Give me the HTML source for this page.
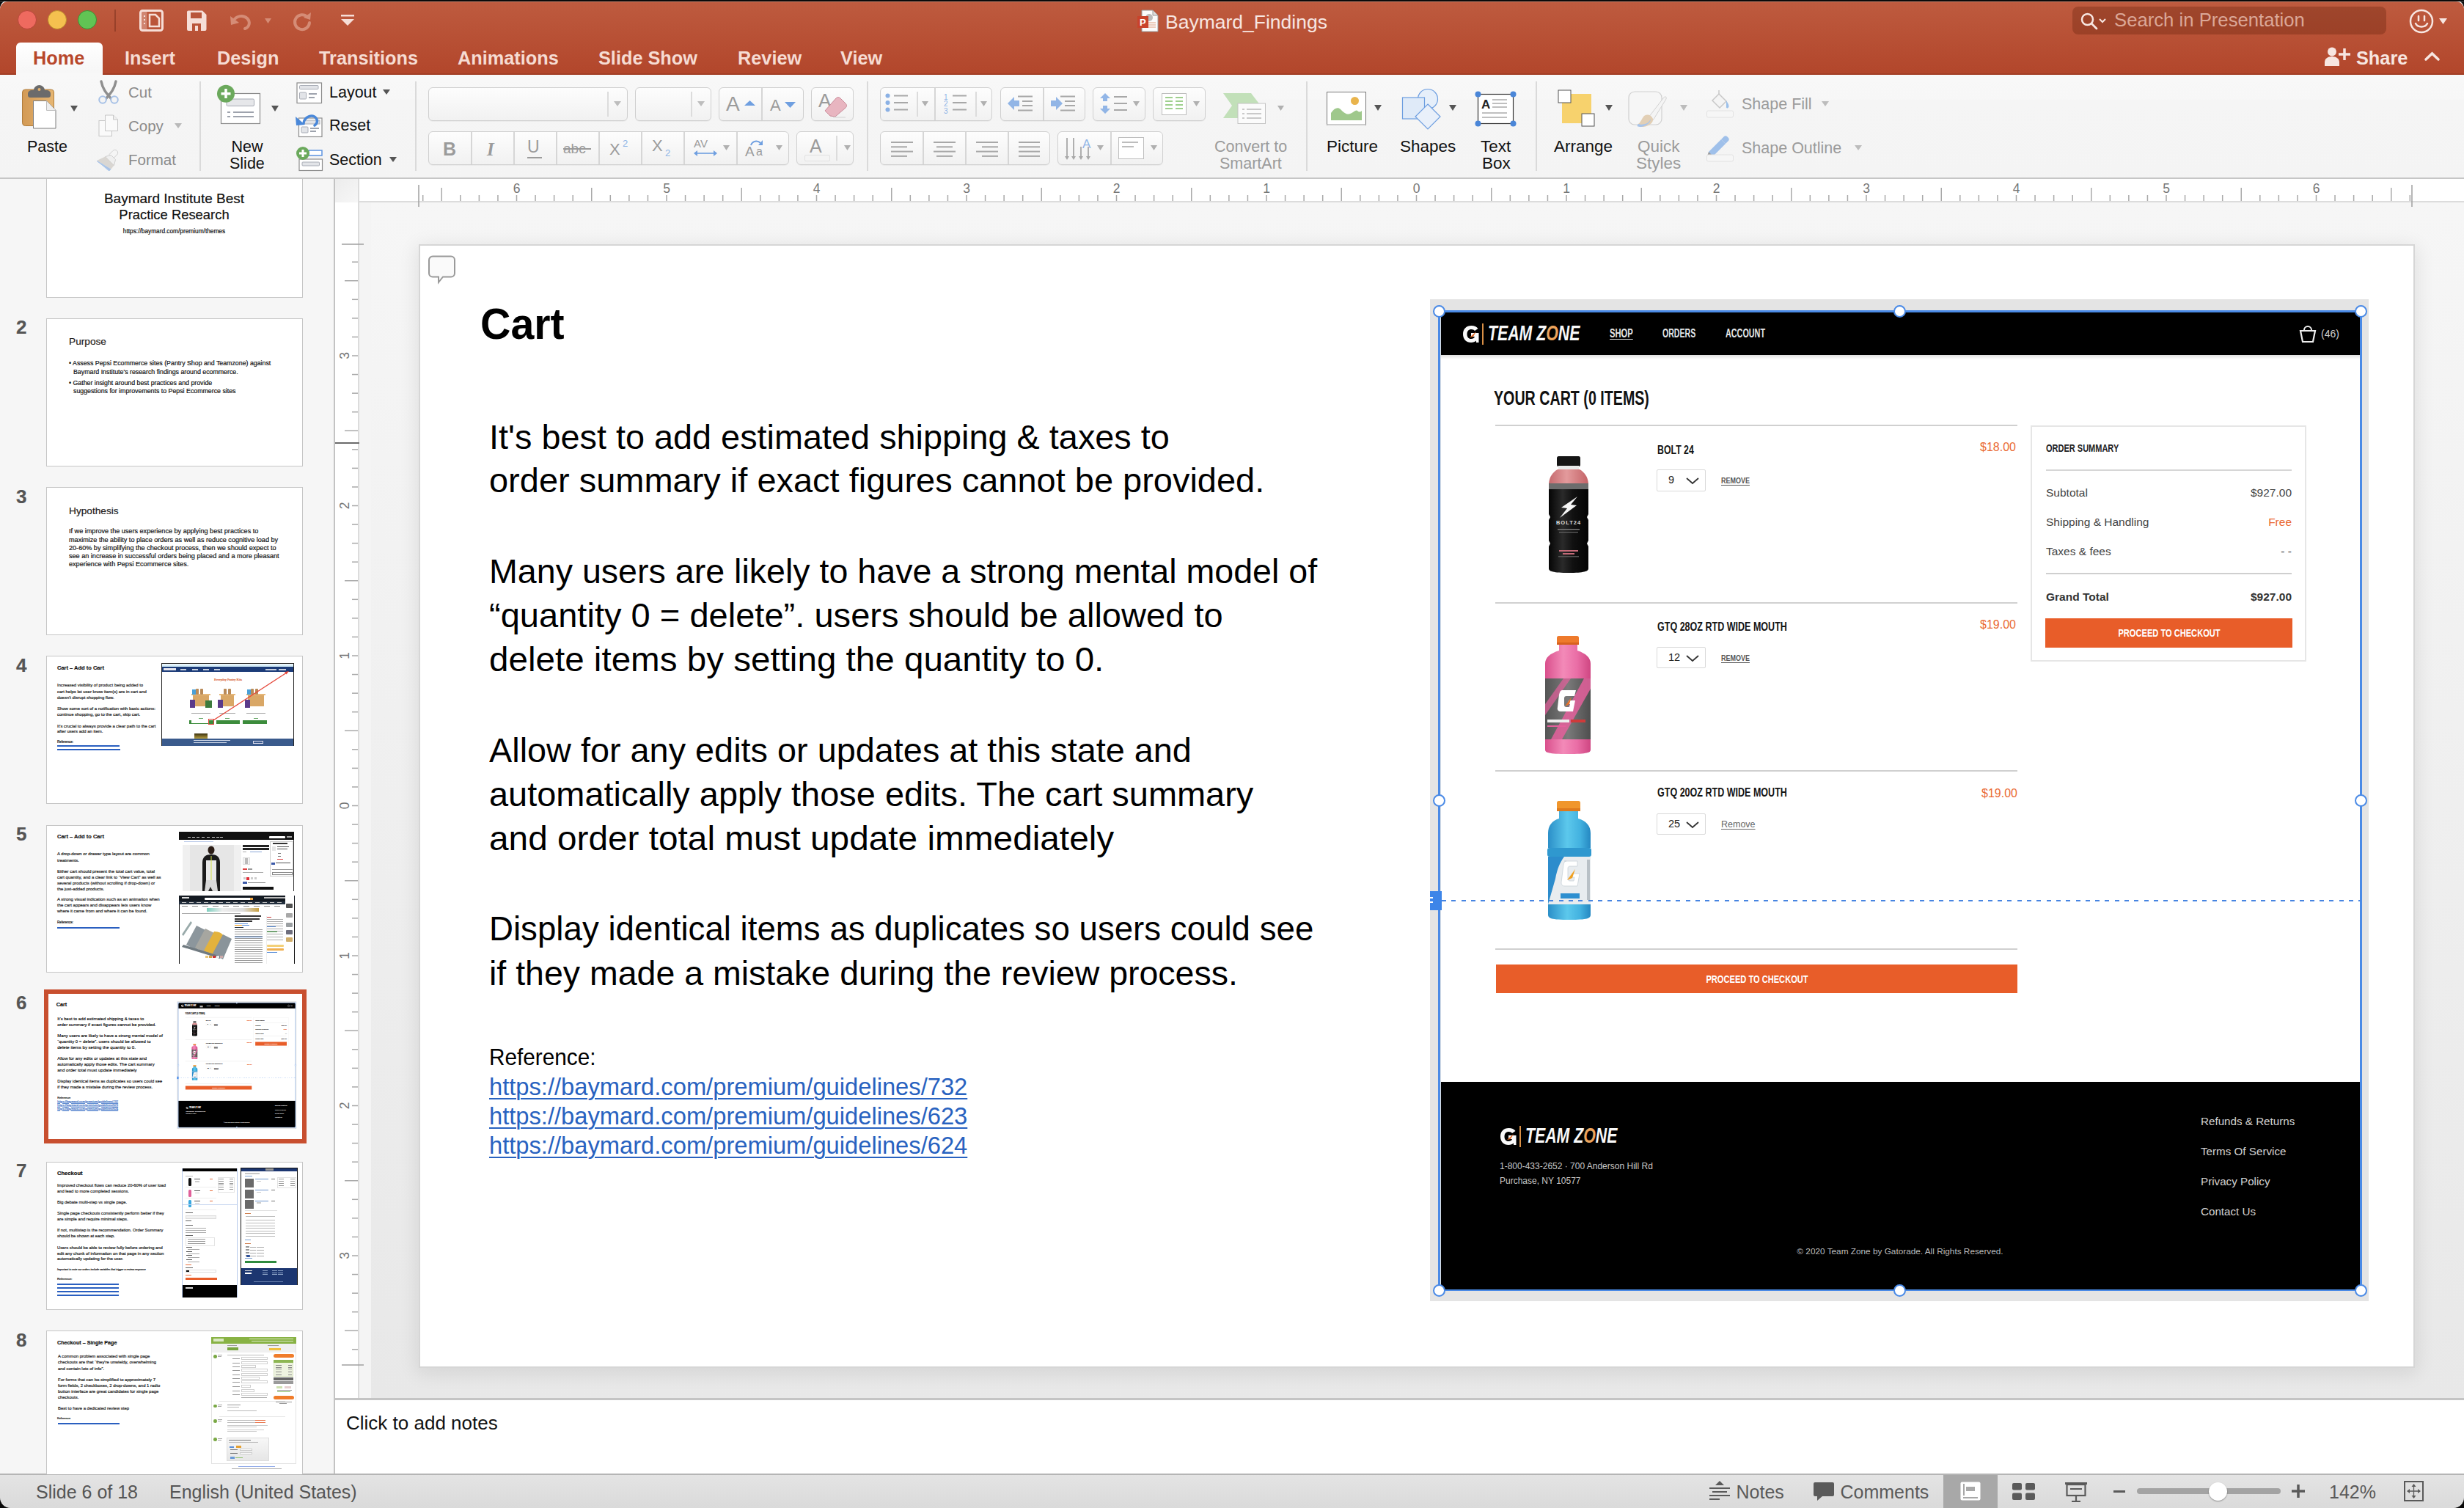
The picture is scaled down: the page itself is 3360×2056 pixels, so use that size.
<!DOCTYPE html>
<html><head><meta charset="utf-8">
<style>
*{margin:0;padding:0;box-sizing:border-box}
html,body{width:3360px;height:2056px;overflow:hidden;background:#0a0a0a;font-family:"Liberation Sans",sans-serif}
.a{position:absolute}
.t{position:absolute;white-space:nowrap;line-height:1}
svg{overflow:visible}
.th .t{-webkit-text-stroke:0.2px currentColor}
.th6 .t{-webkit-text-stroke:1px currentColor}
.th6 .t[style*=underline]{text-decoration-thickness:9px !important;text-underline-offset:3px !important}
</style></head><body>
<div class="a" style="left:0px;top:0px;width:3360px;height:2056px;background:#f3f3f3;border-radius:12px 12px 14px 14px"></div>
<div class="a" style="left:0px;top:0px;width:3360px;height:2px;background:#0a0a0a"></div>
<div class="a" style="left:0px;top:2px;width:3360px;height:99px;background:linear-gradient(#be5b3f,#b2462b);border-radius:11px 11px 0 0"></div>
<div class="a" style="left:0px;top:2px;width:3360px;height:1px;background:rgba(255,255,255,0.25);border-radius:11px 11px 0 0"></div>
<div class="a" style="left:24px;top:14px;width:26px;height:26px;border-radius:50%;background:#ee6a5f;border:1.5px solid #b8463c"></div>
<div class="a" style="left:65px;top:14px;width:26px;height:26px;border-radius:50%;background:#f5c04f;border:1.5px solid #c1922f"></div>
<div class="a" style="left:106px;top:14px;width:26px;height:26px;border-radius:50%;background:#61c454;border:1.5px solid #3b9234"></div>
<div class="a" style="left:156px;top:13px;width:2px;height:30px;background:rgba(90,30,15,0.35)"></div>
<div class="t" style="left:1589px;top:17.1px;font-size:26.5px;color:#f7e6e1;font-weight:normal;">Baymard_Findings</div>
<div class="a" style="left:2826px;top:9px;width:428px;height:38px;border-radius:8px;background:rgba(90,25,8,0.30)"></div>
<div class="t" style="left:2883px;top:15.2px;font-size:25.7px;color:#dba797;font-weight:normal;">Search in Presentation</div>
<div class="a" style="left:22px;top:58px;width:118px;height:43px;border-radius:6px 6px 0 0;background:linear-gradient(#ffffff,#f6f6f6)"></div>
<div class="t" style="left:45px;top:66.5px;font-size:25.3px;color:#b8472b;font-weight:bold;">Home</div>
<div class="t" style="left:170px;top:66.5px;font-size:25.3px;color:#f6dcd3;font-weight:bold;">Insert</div>
<div class="t" style="left:296px;top:66.5px;font-size:25.3px;color:#f6dcd3;font-weight:bold;">Design</div>
<div class="t" style="left:435px;top:66.5px;font-size:25.3px;color:#f6dcd3;font-weight:bold;">Transitions</div>
<div class="t" style="left:624px;top:66.5px;font-size:25.3px;color:#f6dcd3;font-weight:bold;">Animations</div>
<div class="t" style="left:816px;top:66.5px;font-size:25.3px;color:#f6dcd3;font-weight:bold;">Slide Show</div>
<div class="t" style="left:1006px;top:66.5px;font-size:25.3px;color:#f6dcd3;font-weight:bold;">Review</div>
<div class="t" style="left:1146px;top:66.5px;font-size:25.3px;color:#f6dcd3;font-weight:bold;">View</div>
<div class="t" style="left:3213px;top:66.5px;font-size:25.3px;color:#f7e6e1;font-weight:bold;">Share</div>
<div class="a" style="left:0px;top:101px;width:3360px;height:142px;background:linear-gradient(#f8f8f8,#f7f7f7 24%,#f5f5f5 25%,#f4f4f4)"></div>
<div class="a" style="left:0px;top:100px;width:3360px;height:1.5px;background:#a23f26"></div>
<div class="a" style="left:22px;top:99px;width:118px;height:4px;background:#f8f8f8"></div>
<div class="a" style="left:0px;top:242px;width:3360px;height:2px;background:#c6c6c6"></div>
<div class="a" style="left:0px;top:244px;width:456px;height:1766px;background:#f6f6f6"></div>
<div class="a" style="left:455px;top:244px;width:2px;height:1766px;background:#c3c3c3"></div>
<div class="a" style="left:457px;top:244px;width:2903px;height:31px;background:#fff"></div>
<div class="a" style="left:457px;top:274px;width:2903px;height:2px;background:#dcdcdc"></div>
<div class="a" style="left:457px;top:244px;width:33px;height:32px;background:linear-gradient(135deg,#ececec,#f7f7f7)"></div>
<div class="a" style="left:457px;top:276px;width:32px;height:1631px;background:#fff"></div>
<div class="a" style="left:488px;top:244px;width:2px;height:1663px;background:#dcdcdc"></div>
<div class="a" style="left:490px;top:276px;width:2870px;height:1631px;background:#f4f4f4"></div>
<div class="a" style="left:506px;top:276px;width:2854px;height:1631px;background:linear-gradient(#f6f6f6,#e8e8e8)"></div>
<div class="a" style="left:457px;top:1907px;width:2903px;height:103px;background:#fff"></div>
<div class="a" style="left:457px;top:1906px;width:2903px;height:3px;background:#c4c4c4"></div>
<div class="t" style="left:472px;top:1926.9px;font-size:26px;color:#111;font-weight:normal;">Click to add notes</div>
<div class="a" style="left:0px;top:2010px;width:3360px;height:46px;background:linear-gradient(#e4e4e4,#dadada);border-radius:0 0 14px 14px"></div>
<div class="a" style="left:0px;top:2009px;width:3360px;height:2px;background:#b5b5b5"></div>
<div class="t" style="left:49px;top:2021.8px;font-size:25px;color:#555;font-weight:normal;">Slide 6 of 18</div>
<div class="t" style="left:231px;top:2021.8px;font-size:25px;color:#555;font-weight:normal;">English (United States)</div>
<div class="a" style="left:571px;top:333px;width:2722px;height:1532px;background:#fff;box-shadow:0 5px 24px 3px rgba(0,0,0,0.085);border:2px solid #d6d6d6"></div>
<svg class="a" style="left:584px;top:348px;" width="40" height="40" viewBox="0 0 40 40"><path d="M6 1.5h25a5 5 0 0 1 5 5v18a5 5 0 0 1-5 5H20l-6 7.5v-7.5H6a5 5 0 0 1-5-5v-18a5 5 0 0 1 5-5z" fill="#fafafa" stroke="#9a9a9a" stroke-width="2"/></svg>
<div class="t" style="left:655px;top:411.5px;font-size:60px;color:#000;font-weight:bold;transform:scaleX(0.955);transform-origin:0 0">Cart</div>
<div class="t" style="left:667px;top:573.3px;font-size:46.7px;color:#000;font-weight:normal;transform:scaleX(1.003);transform-origin:0 0">It's best to add estimated shipping &amp; taxes to</div>
<div class="t" style="left:667px;top:632.3px;font-size:46.7px;color:#000;font-weight:normal;transform:scaleX(1.006);transform-origin:0 0">order summary if exact figures cannot be provided.</div>
<div class="t" style="left:667px;top:756.3px;font-size:46.7px;color:#000;font-weight:normal;transform:scaleX(0.998);transform-origin:0 0">Many users are likely to have a strong mental model of</div>
<div class="t" style="left:667px;top:816.3px;font-size:46.7px;color:#000;font-weight:normal;transform:scaleX(1.008);transform-origin:0 0">“quantity 0 = delete”. users should be allowed to</div>
<div class="t" style="left:667px;top:876.3px;font-size:46.7px;color:#000;font-weight:normal;transform:scaleX(1.019);transform-origin:0 0">delete items by setting the quantity to 0.</div>
<div class="t" style="left:667px;top:1000.3px;font-size:46.7px;color:#000;font-weight:normal;transform:scaleX(1.003);transform-origin:0 0">Allow for any edits or updates at this state and</div>
<div class="t" style="left:667px;top:1060.3px;font-size:46.7px;color:#000;font-weight:normal;transform:scaleX(1.005);transform-origin:0 0">automatically apply those edits. The cart summary</div>
<div class="t" style="left:667px;top:1120.3px;font-size:46.7px;color:#000;font-weight:normal;transform:scaleX(1.023);transform-origin:0 0">and order total must update immediately</div>
<div class="t" style="left:667px;top:1243.3px;font-size:46.7px;color:#000;font-weight:normal;transform:scaleX(0.978);transform-origin:0 0">Display identical items as duplicates so users could see</div>
<div class="t" style="left:667px;top:1304.3px;font-size:46.7px;color:#000;font-weight:normal;transform:scaleX(0.996);transform-origin:0 0">if they made a mistake during the review process.</div>
<div class="t" style="left:667px;top:1426.1px;font-size:30.5px;color:#000;font-weight:normal;transform:scaleX(0.975);transform-origin:0 0">Reference:</div>
<div class="t" style="left:667px;top:1466.2px;font-size:32.7px;color:#2862c0;font-weight:normal;text-decoration:underline;text-decoration-thickness:2px;text-underline-offset:4px">https://baymard.com/premium/guidelines/732</div>
<div class="t" style="left:667px;top:1506.2px;font-size:32.7px;color:#2862c0;font-weight:normal;text-decoration:underline;text-decoration-thickness:2px;text-underline-offset:4px">https://baymard.com/premium/guidelines/623</div>
<div class="t" style="left:667px;top:1546.2px;font-size:32.7px;color:#2862c0;font-weight:normal;text-decoration:underline;text-decoration-thickness:2px;text-underline-offset:4px">https://baymard.com/premium/guidelines/624</div>
<div class="a" style="left:1950px;top:408px;width:1280px;height:1366px;background:#e4e4e4"></div>
<div class="a" style="left:1965px;top:424px;width:1254px;height:1335px;background:#fff"></div>
<div class="a" style="left:1965px;top:424px;width:1254px;height:60px;background:#000"></div>
<div class="a" style="left:1965px;top:484px;width:1254px;height:6px;background:linear-gradient(rgba(0,0,0,.12),rgba(0,0,0,0))"></div>
<svg class="a" style="left:1995px;top:443.5px;" width="22" height="23" viewBox="0 0 22 23"><path d="M11.5 0C4.5 0 0 4.5 0 11.5S4.5 23 11 23c3 0 5.5-1 7-2.5V23h3.5V10H11v5h5c-.5 2-2.5 3-5 3-3.5 0-5.5-2.5-5.5-6.5S7.5 5 11.5 5c2 0 3.5.8 4.5 2l4.5-3C18.5 1.5 15.5 0 11.5 0z" fill="#fafafa"/><path d="M9 16l9-8-4 7z" fill="#e8702a"/></svg>
<div class="a" style="left:2021px;top:440.5px;width:2px;height:29px;background:#d98f45"></div>
<div class="t" style="left:2029px;top:438.7px;font-size:30px;font-weight:bold;font-style:italic;color:#f8f8f8;transform:scaleX(0.71);transform-origin:0 0">TEAM Z<span style="color:#eba35c">O</span>NE</div>
<div class="t" style="left:2195px;top:446.9px;font-size:16px;color:#e6e6e6;font-weight:bold;transform:scaleX(0.7);transform-origin:0 0;text-decoration:underline;text-underline-offset:2px">SHOP</div>
<div class="t" style="left:2267px;top:446.9px;font-size:16px;color:#e6e6e6;font-weight:bold;transform:scaleX(0.66);transform-origin:0 0;">ORDERS</div>
<div class="t" style="left:2353px;top:446.9px;font-size:16px;color:#e6e6e6;font-weight:bold;transform:scaleX(0.675);transform-origin:0 0;">ACCOUNT</div>
<svg class="a" style="left:3135px;top:441px;" width="24" height="27" viewBox="0 0 24 27"><path d="M7 9a5 5 0 0 1 10 0" fill="none" stroke="#eee" stroke-width="2"/><path d="M2 10h20l-3 15H5z" fill="none" stroke="#eee" stroke-width="2.2"/></svg>
<div class="t" style="left:3165px;top:448.1px;font-size:14px;color:#cfcfcf;font-weight:normal;">(46)</div>
<div class="t" style="left:2037px;top:528.6px;font-size:27.5px;color:#111;font-weight:bold;transform:scaleX(0.715);transform-origin:0 0;">YOUR CART (0 ITEMS)</div>
<div class="a" style="left:2039px;top:579px;width:712px;height:2px;background:#d0d0d0"></div>
<div class="a" style="left:2039px;top:821px;width:712px;height:2px;background:#d0d0d0"></div>
<div class="a" style="left:2039px;top:1050px;width:712px;height:2px;background:#d0d0d0"></div>
<div class="a" style="left:2039px;top:1293px;width:712px;height:2px;background:#d0d0d0"></div>
<div class="t" style="left:2260px;top:605.2px;font-size:17.4px;color:#151515;font-weight:bold;transform:scaleX(0.71);transform-origin:0 0;">BOLT 24</div>
<div class="t" style="left:1749px;width:1000px;text-align:right;top:602.4px;font-size:16px;color:#ea6a33;font-weight:normal;">$18.00</div>
<div class="a" style="left:2259px;top:640px;width:67px;height:30px;border:1.5px solid #d9d9d9;border-radius:2px;background:#fff"></div>
<div class="t" style="left:2275px;top:647.2px;font-size:14.5px;color:#222;font-weight:normal;">9</div>
<svg class="a" style="left:2299px;top:651px;" width="18" height="9" viewBox="0 0 18 9"><path d="M1 1l8 7 8-7" fill="none" stroke="#333" stroke-width="1.8"/></svg>
<div class="t" style="left:2347px;top:648.9px;font-size:11.6px;color:#555;font-weight:bold;transform:scaleX(0.775);transform-origin:0 0;text-decoration:underline;text-underline-offset:2px">REMOVE</div>
<svg class="a" style="left:2104px;top:620px;" width="70" height="170" viewBox="0 0 70 170"><defs><linearGradient id="bk" x1="0" x2="1"><stop offset="0" stop-color="#050505"/><stop offset=".35" stop-color="#2a2a2a"/><stop offset=".6" stop-color="#111"/><stop offset="1" stop-color="#030303"/></linearGradient><linearGradient id="pk" x1="0" x2="1"><stop offset="0" stop-color="#c56a6e"/><stop offset=".45" stop-color="#e39a9c"/><stop offset="1" stop-color="#c46367"/></linearGradient></defs><rect x="19" y="2" width="32" height="14" rx="2.5" fill="#151515"/><rect x="21" y="15" width="28" height="5" fill="#e9e9e9"/><path d="M20 20h30c7 4 11 10 12 19H8c1-9 5-15 12-19z" fill="url(#pk)"/><rect x="8" y="39" width="54" height="8" fill="#6d6d6d"/><path d="M8 47h54v34l-2 4 2 4v28l-2 4 2 4v30c0 4-6 6-27 6s-27-2-27-6v-30l2-4-2-4v-28l2-4-2-4z" fill="url(#bk)"/><path d="M47 57L25 72l8 1-10 13L46 69l-8-1z" fill="#f6f6f6"/><text x="35" y="95" font-family="Liberation Sans" font-weight="bold" font-size="7.5" fill="#ddd" text-anchor="middle" letter-spacing="1">BOLT24</text><rect x="20" y="101" width="30" height="1.5" fill="#777"/><rect x="22" y="105" width="26" height="1.2" fill="#666"/><rect x="22" y="130" width="26" height="2" fill="#c46a78"/><rect x="27" y="134" width="16" height="2" fill="#c46a78"/><rect x="21" y="138" width="28" height="1.5" fill="#555"/></svg>
<div class="t" style="left:2260px;top:846.9px;font-size:16.9px;color:#151515;font-weight:bold;transform:scaleX(0.742);transform-origin:0 0;">GTQ 28OZ RTD WIDE MOUTH</div>
<div class="t" style="left:1749px;width:1000px;text-align:right;top:844.4px;font-size:16px;color:#ea6a33;font-weight:normal;">$19.00</div>
<div class="a" style="left:2259px;top:882px;width:67px;height:29px;border:1.5px solid #d9d9d9;border-radius:2px;background:#fff"></div>
<div class="t" style="left:2275px;top:889.2px;font-size:14.5px;color:#222;font-weight:normal;">12</div>
<svg class="a" style="left:2299px;top:893px;" width="18" height="9" viewBox="0 0 18 9"><path d="M1 1l8 7 8-7" fill="none" stroke="#333" stroke-width="1.8"/></svg>
<div class="t" style="left:2347px;top:891.1px;font-size:11.6px;color:#555;font-weight:bold;transform:scaleX(0.775);transform-origin:0 0;text-decoration:underline;text-underline-offset:2px">REMOVE</div>
<svg class="a" style="left:2104px;top:864px;" width="70" height="170" viewBox="0 0 70 170"><defs><linearGradient id="pl" x1="0" x2="1"><stop offset="0" stop-color="#d94f8c"/><stop offset=".4" stop-color="#f38ab8"/><stop offset=".7" stop-color="#ea6ea6"/><stop offset="1" stop-color="#cf4682"/></linearGradient><linearGradient id="gl" x1="0" x2="1"><stop offset="0" stop-color="#555"/><stop offset=".5" stop-color="#7a7a7a"/><stop offset="1" stop-color="#4e4e4e"/></linearGradient></defs><rect x="19" y="3" width="30" height="12" rx="2.5" fill="#ee7a2c"/><rect x="19" y="12" width="30" height="3" fill="#d8621e"/><path d="M22 15h25v8c12 4 18 10 18 18v20H3v-20c0-8 6-14 19-18z" fill="url(#pl)"/><path d="M3 61h62v83H3z" fill="url(#gl)"/><path d="M11 144L56 61h9v14L26 144z" fill="#e5609c" opacity=".85"/><path d="M3 96l25-35h10L3 111z" fill="#e5609c" opacity=".7"/><path d="M26 77h19l-2 8h-11c-2 0-3 1-3 3v9c0 2 1 3 3 3h4l1-4h-3l1-5h9l-3 15h-16c-4 0-6-2-5-6l2-17c1-4 2-6 4-6z" fill="#fff"/><path d="M30 99l9-13-3 10z" fill="#e8702a"/><rect x="6 " y="117" width="30" height="4" fill="#eee"/><rect x="38" y="117" width="20" height="4" fill="#d03a3a"/><rect x="6" y="125" width="25" height="2" fill="#e5609c"/><path d="M3 144h62v14c0 4-4 6-31 6s-31-2-31-6z" fill="url(#pl)"/></svg>
<div class="t" style="left:2260px;top:1073.1px;font-size:16.9px;color:#151515;font-weight:bold;transform:scaleX(0.742);transform-origin:0 0;">GTQ 20OZ RTD WIDE MOUTH</div>
<div class="t" style="left:1751px;width:1000px;text-align:right;top:1074.4px;font-size:16px;color:#ea6a33;font-weight:normal;">$19.00</div>
<div class="a" style="left:2259px;top:1109px;width:67px;height:29px;border:1.5px solid #d9d9d9;border-radius:2px;background:#fff"></div>
<div class="t" style="left:2275px;top:1116.2px;font-size:14.5px;color:#222;font-weight:normal;">25</div>
<svg class="a" style="left:2299px;top:1120px;" width="18" height="9" viewBox="0 0 18 9"><path d="M1 1l8 7 8-7" fill="none" stroke="#333" stroke-width="1.8"/></svg>
<div class="t" style="left:2347px;top:1117.9px;font-size:12.5px;color:#666;font-weight:normal;text-decoration:underline;text-underline-offset:2px">Remove</div>
<svg class="a" style="left:2104px;top:1090px;" width="70" height="170" viewBox="0 0 70 170"><defs><linearGradient id="bl" x1="0" x2="1"><stop offset="0" stop-color="#2b8fc8"/><stop offset=".45" stop-color="#5cc8ec"/><stop offset=".75" stop-color="#43b2e0"/><stop offset="1" stop-color="#2588c2"/></linearGradient></defs><rect x="19" y="2" width="32" height="14" rx="2.5" fill="#f0962c"/><rect x="19" y="12" width="32" height="4" fill="#de7a1c"/><path d="M22 16h26v10c11 3 17 10 17 20v20H7v-20c0-10 5-17 15-20z" fill="url(#bl)"/><rect x="6" y="66" width="60" height="12" rx="3" fill="#2f98cf"/><rect x="7" y="78" width="58" height="65" fill="#e8ecef"/><path d="M7 78h22c-6 8-10 18-12 30l-10 35z" fill="#2c8ccc"/><path d="M29 84h18v7h-10c-2 0-3 1-3 3v14c0 2 1 3 3 3h5l1-5h-4l1-5h10l-3 17h-17c-4 0-5-2-5-5l3-24c1-4 2-5 4-5z" fill="#fff" stroke="#c9d2d8" stroke-width=".8"/><path d="M33 110l11-15-4 12z" fill="#f0a020"/><rect x="60" y="82" width="4" height="55" fill="#b8c0c6"/><rect x="24" y="128" width="26" height="7" fill="#2d8fd0"/><path d="M7 143h58v14c0 5-4 7-29 7s-29-2-29-7z" fill="url(#bl)"/></svg>
<div class="a" style="left:2040px;top:1315px;width:711px;height:39px;background:#e85d29"></div>
<div class="t" style="left:1895.5px;width:1000px;text-align:center;top:1327.2px;font-size:15px;color:#fff;font-weight:bold;transform:scaleX(0.74);transform-origin:50% 0;">PROCEED TO CHECKOUT</div>
<div class="a" style="left:2769px;top:580px;width:376px;height:322px;border:2px solid #e6e6e6;background:#fff"></div>
<div class="t" style="left:2790px;top:602.8px;font-size:15.5px;color:#222;font-weight:bold;transform:scaleX(0.71);transform-origin:0 0;">ORDER SUMMARY</div>
<div class="a" style="left:2790px;top:640px;width:335px;height:2px;background:#d6d6d6"></div>
<div class="t" style="left:2790px;top:663.8px;font-size:15.5px;color:#444;font-weight:normal;">Subtotal</div>
<div class="t" style="left:2125px;width:1000px;text-align:right;top:663.8px;font-size:15.5px;color:#444;font-weight:normal;">$927.00</div>
<div class="t" style="left:2790px;top:703.8px;font-size:15.5px;color:#444;font-weight:normal;">Shipping &amp; Handling</div>
<div class="t" style="left:2125px;width:1000px;text-align:right;top:703.8px;font-size:15.5px;color:#ea6a33;font-weight:normal;">Free</div>
<div class="t" style="left:2790px;top:743.8px;font-size:15.5px;color:#444;font-weight:normal;">Taxes &amp; fees</div>
<div class="t" style="left:2125px;width:1000px;text-align:right;top:743.8px;font-size:15.5px;color:#444;font-weight:normal;">- -</div>
<div class="a" style="left:2790px;top:781px;width:335px;height:2px;background:#cfcfcf"></div>
<div class="t" style="left:2790px;top:805.8px;font-size:15.5px;color:#333;font-weight:bold;">Grand Total</div>
<div class="t" style="left:2125px;width:1000px;text-align:right;top:805.8px;font-size:15.5px;color:#333;font-weight:bold;">$927.00</div>
<div class="a" style="left:2789px;top:843px;width:337px;height:40px;background:#e85d29"></div>
<div class="t" style="left:2457.5px;width:1000px;text-align:center;top:855.2px;font-size:15px;color:#fff;font-weight:bold;transform:scaleX(0.74);transform-origin:50% 0;">PROCEED TO CHECKOUT</div>
<div class="a" style="left:1965px;top:1475px;width:1254px;height:284px;background:#000"></div>
<svg class="a" style="left:2046px;top:1538px;" width="22" height="23" viewBox="0 0 22 23"><path d="M11.5 0C4.5 0 0 4.5 0 11.5S4.5 23 11 23c3 0 5.5-1 7-2.5V23h3.5V10H11v5h5c-.5 2-2.5 3-5 3-3.5 0-5.5-2.5-5.5-6.5S7.5 5 11.5 5c2 0 3.5.8 4.5 2l4.5-3C18.5 1.5 15.5 0 11.5 0z" fill="#fafafa"/><path d="M9 16l9-8-4 7z" fill="#e8702a"/></svg>
<div class="a" style="left:2072px;top:1535px;width:2px;height:29px;background:#d98f45"></div>
<div class="t" style="left:2080px;top:1533.2px;font-size:30px;font-weight:bold;font-style:italic;color:#f8f8f8;transform:scaleX(0.71);transform-origin:0 0">TEAM Z<span style="color:#eba35c">O</span>NE</div>
<div class="t" style="left:2045px;top:1583.8px;font-size:12px;color:#c8c8c8;font-weight:normal;">1-800-433-2652 · 700 Anderson Hill Rd</div>
<div class="t" style="left:2045px;top:1603.8px;font-size:12px;color:#c8c8c8;font-weight:normal;">Purchase, NY 10577</div>
<div class="t" style="left:2091px;width:1000px;text-align:center;top:1701.0px;font-size:11.8px;color:#bdbdbd;font-weight:normal;">© 2020 Team Zone by Gatorade. All Rights Reserved.</div>
<div class="t" style="left:3001px;top:1521.1px;font-size:15.2px;color:#d2d2d2;font-weight:normal;">Refunds &amp; Returns</div>
<div class="t" style="left:3001px;top:1562.1px;font-size:15.2px;color:#d2d2d2;font-weight:normal;">Terms Of Service</div>
<div class="t" style="left:3001px;top:1603.1px;font-size:15.2px;color:#d2d2d2;font-weight:normal;">Privacy Policy</div>
<div class="t" style="left:3001px;top:1644.1px;font-size:15.2px;color:#d2d2d2;font-weight:normal;">Contact Us</div>
<div class="a" style="left:1961px;top:423px;width:2.5px;height:1337px;background:#4a8ae6"></div>
<div class="a" style="left:3218px;top:423px;width:2.5px;height:1337px;background:#4a8ae6"></div>
<div class="a" style="left:1961px;top:423px;width:1260px;height:2.5px;background:#4a8ae6"></div>
<div class="a" style="left:1961px;top:1757.5px;width:1260px;height:2.5px;background:#4a8ae6"></div>
<div class="a" style="left:1966px;top:1227px;width:1253px;height:2px;background:repeating-linear-gradient(90deg,#4785e2 0 6px,transparent 6px 13.3px)"></div>
<div class="a" style="left:1950px;top:1215px;width:16px;height:26px;background:#3d85e8"></div>
<div class="a" style="left:1950px;top:1223px;width:4px;height:2px;background:#fff"></div>
<div class="a" style="left:1950px;top:1229px;width:4px;height:2px;background:#fff"></div>
<div class="a" style="left:1954px;top:416px;width:17px;height:17px;border-radius:50%;background:#fff;border:2.5px solid #4a8ae6"></div>
<div class="a" style="left:2582px;top:416px;width:17px;height:17px;border-radius:50%;background:#fff;border:2.5px solid #4a8ae6"></div>
<div class="a" style="left:3211px;top:416px;width:17px;height:17px;border-radius:50%;background:#fff;border:2.5px solid #4a8ae6"></div>
<div class="a" style="left:1954px;top:1083px;width:17px;height:17px;border-radius:50%;background:#fff;border:2.5px solid #4a8ae6"></div>
<div class="a" style="left:3211px;top:1083px;width:17px;height:17px;border-radius:50%;background:#fff;border:2.5px solid #4a8ae6"></div>
<div class="a" style="left:1954px;top:1751px;width:17px;height:17px;border-radius:50%;background:#fff;border:2.5px solid #4a8ae6"></div>
<div class="a" style="left:2582px;top:1751px;width:17px;height:17px;border-radius:50%;background:#fff;border:2.5px solid #4a8ae6"></div>
<div class="a" style="left:3211px;top:1751px;width:17px;height:17px;border-radius:50%;background:#fff;border:2.5px solid #4a8ae6"></div>
<svg class="a" style="left:190px;top:13px;" width="33" height="30" viewBox="0 0 33 30"><rect x="1.5" y="1.5" width="30" height="27" rx="3" fill="none" stroke="#f6ded7" stroke-width="3"/><rect x="1.5" y="1.5" width="9" height="27" fill="#f6ded7" opacity=".35"/><path d="M14 7h8l5 5v11H14z" fill="none" stroke="#f6ded7" stroke-width="2.5"/><path d="M7 8v2M7 13v2M7 18v2" stroke="#f6ded7" stroke-width="2"/></svg>
<svg class="a" style="left:254px;top:13px;" width="29" height="30" viewBox="0 0 29 30"><path d="M3 1.5h19l5.5 5.5v20a2 2 0 0 1-2 2H3a2 2 0 0 1-2-2v-23a2 2 0 0 1 2-2.5z" fill="#f6ded7"/><rect x="6" y="4" width="15" height="8" fill="#b9553a"/><rect x="8" y="19" width="12" height="10" fill="#b9553a"/><rect x="12" y="22" width="4" height="7" fill="#f6ded7"/></svg>
<svg class="a" style="left:313px;top:17px;" width="32" height="24" viewBox="0 0 32 24"><path d="M5 12c4-8 14-9 19-4s3 12-3 14" fill="none" stroke="#d58c76" stroke-width="4" stroke-linecap="round"/><path d="M1 5l1 12 11-3z" fill="#d58c76"/></svg>
<svg class="a" style="left:361px;top:25px;" width="9" height="7" viewBox="0 0 9 7"><path d="M0 0h9l-4.5 7z" fill="#d58c76"/></svg>
<svg class="a" style="left:399px;top:16px;" width="26" height="26" viewBox="0 0 26 26"><path d="M20 7a10 10 0 1 0 3 8" fill="none" stroke="#d58c76" stroke-width="4" stroke-linecap="round"/><path d="M25 1l-1 10-9-3z" fill="#d58c76"/></svg>
<svg class="a" style="left:465px;top:20px;" width="18" height="16" viewBox="0 0 18 16"><rect x="0" y="0" width="18" height="2.5" fill="#f6ded7"/><path d="M0 6h18l-9 9z" fill="#f6ded7"/></svg>
<svg class="a" style="left:1551px;top:13px;" width="29" height="31" viewBox="0 0 29 31"><path d="M6 1h15l7 7v22H6z" fill="#fbfbfb" stroke="#9a9a9a" stroke-width="1"/><path d="M21 1v7h7" fill="#ddd" stroke="#9a9a9a" stroke-width="1"/><circle cx="16" cy="11" r="5" fill="#bbb"/><path d="M15 18h10M15 21h10M15 24h10" stroke="#e0a080" stroke-width="1.2"/><rect x="0" y="9" width="15" height="16" fill="#c9432b"/><text x="3" y="22" font-family="Liberation Sans" font-weight="bold" font-size="13" fill="#fff">P</text></svg>
<svg class="a" style="left:2837px;top:17px;" width="38" height="23" viewBox="0 0 38 23"><circle cx="9.5" cy="9.5" r="7.5" fill="none" stroke="#f7e6e1" stroke-width="2.5"/><path d="M15 15l7 7" stroke="#f7e6e1" stroke-width="2.8" stroke-linecap="round"/><path d="M26 9l4 4 4-4" fill="none" stroke="#f7e6e1" stroke-width="2"/></svg>
<svg class="a" style="left:3285px;top:12px;" width="34" height="34" viewBox="0 0 34 34"><circle cx="17" cy="17" r="15" fill="none" stroke="#f7e6e1" stroke-width="2.5"/><path d="M13 10v6M21 10v6" stroke="#f7e6e1" stroke-width="2.5" stroke-linecap="round"/><path d="M9 20c3 6 13 6 16 0" fill="none" stroke="#f7e6e1" stroke-width="2.5" stroke-linecap="round"/></svg>
<svg class="a" style="left:3326px;top:25px;" width="11" height="8" viewBox="0 0 11 8"><path d="M0 0h11l-5.5 8z" fill="#f7e6e1"/></svg>
<svg class="a" style="left:3170px;top:64px;" width="35" height="26" viewBox="0 0 35 26"><circle cx="10" cy="6.5" r="6" fill="#f7e6e1"/><path d="M0 26v-5c0-5 4-8 10-8s10 3 10 8v5z" fill="#f7e6e1"/><path d="M27 2v16M19 10h16" stroke="#f7e6e1" stroke-width="3.5"/></svg>
<svg class="a" style="left:3306px;top:71px;" width="21" height="12" viewBox="0 0 21 12"><path d="M2 10l8.5-8 8.5 8" fill="none" stroke="#f7e6e1" stroke-width="3.5" stroke-linecap="round"/></svg>
<svg class="a" style="left:30px;top:116px;" width="48" height="60" viewBox="0 0 48 60"><defs><linearGradient id="tan" x1="0" x2="1"><stop offset="0" stop-color="#d39a55"/><stop offset="1" stop-color="#e6b673"/></linearGradient></defs><rect x="0.5" y="6" width="43" height="49.5" rx="4" fill="url(#tan)" stroke="#b07d3c" stroke-width="1"/><path d="M8 12c0-3 2-5 6-5h2c0-4 4-7 7.5-7S31 3 31 7h2c4 0 6 2 6 5v2c0 2-1.5 3-3 3H11c-1.5 0-3-1-3-3z" fill="#6b6b6b"/><circle cx="23.5" cy="6" r="2" fill="#e0b070"/><path d="M15.5 21.5h18l12.5 13v24.5H15.5z" fill="#fff" stroke="#7d7d7d" stroke-width="1"/><path d="M33.5 21.5v13H46" fill="#eee" stroke="#bbb" stroke-width="1"/></svg>
<svg class="a" style="left:96px;top:144px;" width="10" height="8" viewBox="0 0 10 8"><path d="M0 0h10l-5.0 8z" fill="#555"/></svg>
<div class="t" style="left:37px;top:189.5px;font-size:21.5px;color:#111;font-weight:normal;">Paste</div>
<svg class="a" style="left:134px;top:110px;" width="28" height="32" viewBox="0 0 28 32"><path d="M4 1c2 10 6 15 14 24M24 1c-2 10-6 15-14 24" stroke="#8f8f8f" stroke-width="3.5" fill="none" stroke-linecap="round"/><circle cx="6" cy="26" r="4.8" fill="#f4f4f4" stroke="#a7c1e6" stroke-width="2"/><circle cx="22" cy="26" r="4.8" fill="#f4f4f4" stroke="#a7c1e6" stroke-width="2"/></svg>
<div class="t" style="left:175px;top:116.3px;font-size:20.5px;color:#8a8a8a;font-weight:normal;">Cut</div>
<svg class="a" style="left:134px;top:156px;" width="28" height="32" viewBox="0 0 28 32"><rect x="1" y="8.5" width="17.5" height="21" fill="#fafafa" stroke="#c6c6c6" stroke-width="1"/><path d="M9.5 1h11l6 6v15.5H9.5z" fill="#fafafa" stroke="#c6c6c6" stroke-width="1"/><path d="M20.5 1v6h6" fill="#eee" stroke="#c6c6c6" stroke-width="1"/></svg>
<div class="t" style="left:175px;top:162.1px;font-size:20.5px;color:#8a8a8a;font-weight:normal;">Copy</div>
<svg class="a" style="left:238px;top:168px;" width="10" height="7" viewBox="0 0 10 7"><path d="M0 0h10l-5.0 7z" fill="#b9b9b9"/></svg>
<svg class="a" style="left:131px;top:203px;" width="34" height="30" viewBox="0 0 34 30"><path d="M23 2.5c1.5-1.5 4-1.5 5.5 0s1.5 4 0 5.5L23.5 13l-5.5-5.5z" fill="#f5f5f5" stroke="#cfcfcf" stroke-width="1"/><path d="M12.5 10.5l8-2 6 6-2 8z" fill="#efefef" stroke="#cfcfcf" stroke-width="1"/><path d="M12.5 10.5l12 12-4 5L1 16z" fill="#d9d6d2"/><path d="M1 16l19.5 11.5-2 2.5L1 17z" fill="#a9c2e4"/><path d="M1 16l8.5 5 9 9-1.5 0z" fill="#aac6ea"/></svg>
<div class="t" style="left:175px;top:208.4px;font-size:20.5px;color:#8a8a8a;font-weight:normal;">Format</div>
<div class="a" style="left:272px;top:111px;width:2px;height:122px;background:#dadada"></div>
<svg class="a" style="left:296px;top:114px;" width="64" height="56" viewBox="0 0 64 56"><rect x="5.5" y="13.5" width="53" height="41" fill="#fff" stroke="#8a8a8a" stroke-width="1.2"/><rect x="13" y="21" width="37.5" height="9.5" rx="1.5" fill="#e6e7ea" stroke="#a5a9b3" stroke-width="1"/><path d="M14 39h4M22 39h28M14 45h4M22 45h28" stroke="#9ea3ad" stroke-width="2"/><circle cx="12" cy="13.7" r="12" fill="#6ba95c"/><path d="M12 7v13M5.5 13.7h13" stroke="#fff" stroke-width="3.5"/></svg>
<svg class="a" style="left:370px;top:144px;" width="10" height="8" viewBox="0 0 10 8"><path d="M0 0h10l-5.0 8z" fill="#555"/></svg>
<div class="t" style="left:315.5px;top:189.5px;font-size:21.5px;color:#111;font-weight:normal;">New</div>
<div class="t" style="left:313px;top:212.7px;font-size:21.5px;color:#111;font-weight:normal;">Slide</div>
<svg class="a" style="left:404px;top:112px;" width="36" height="30" viewBox="0 0 36 30"><rect x="1" y="1" width="33.5" height="27.5" fill="#fff" stroke="#8c8c8c" stroke-width="1.2"/><rect x="4.5" y="4.5" width="25.5" height="5" rx="1" fill="#e2e4e8" stroke="#a9adb6" stroke-width="1"/><rect x="4.5" y="14" width="9" height="9" rx="1" fill="#e2e4e8" stroke="#a9adb6" stroke-width="1"/><path d="M17 16h11M17 21h8" stroke="#9ea3ad" stroke-width="2"/></svg>
<div class="t" style="left:449px;top:115.7px;font-size:21.5px;color:#111;font-weight:normal;">Layout</div>
<svg class="a" style="left:522px;top:122px;" width="10" height="7" viewBox="0 0 10 7"><path d="M0 0h10l-5.0 7z" fill="#555"/></svg>
<svg class="a" style="left:403px;top:153px;" width="38" height="35" viewBox="0 0 38 35"><rect x="4.5" y="8" width="31.5" height="25.5" fill="#fff" stroke="#8c8c8c" stroke-width="1.2"/><rect x="12" y="11" width="21" height="5" fill="#e2e4e8" stroke="#a9adb6" stroke-width="1"/><rect x="8" y="20" width="9" height="8" rx="1" fill="#e2e4e8" stroke="#a9adb6" stroke-width="1"/><path d="M20 22h12M20 26h8" stroke="#9ea3ad" stroke-width="2"/><path d="M11 15c1-9 12-13 17-7 3 4 1 8-2 10" fill="none" stroke="#4a88d9" stroke-width="3.5" stroke-linecap="round"/><path d="M0 6l1 12 12-1z" fill="#4a88d9"/></svg>
<div class="t" style="left:449px;top:161.4px;font-size:21.5px;color:#111;font-weight:normal;">Reset</div>
<svg class="a" style="left:403px;top:199px;" width="38" height="35" viewBox="0 0 38 35"><rect x="18" y="6" width="18" height="7" fill="#fff" stroke="#5c93e0" stroke-width="1.5"/><rect x="5" y="18" width="31.5" height="15.5" fill="#fff" stroke="#8c8c8c" stroke-width="1.2"/><rect x="9" y="22" width="23.5" height="5" rx="1" fill="#e2e4e8" stroke="#a9adb6" stroke-width="1"/><circle cx="10" cy="10" r="9" fill="#6ba95c"/><path d="M10 5v10M5 10h10" stroke="#fff" stroke-width="3"/></svg>
<div class="t" style="left:449px;top:207.5px;font-size:21.5px;color:#111;font-weight:normal;">Section</div>
<svg class="a" style="left:531px;top:214px;" width="10" height="7" viewBox="0 0 10 7"><path d="M0 0h10l-5.0 7z" fill="#555"/></svg>
<div class="a" style="left:566px;top:111px;width:2px;height:122px;background:#dadada"></div>
<div class="a" style="left:584px;top:119px;width:272px;height:46px;border:1.5px solid #cfcfcf;border-radius:6px;background:linear-gradient(#fdfdfd,#f1f1f1);box-shadow:0 1px 0 rgba(0,0,0,.04)"></div>
<div class="a" style="left:828px;top:125px;width:1.5px;height:34px;background:#dcdcdc"></div>
<svg class="a" style="left:837px;top:138px;" width="10" height="7" viewBox="0 0 10 7"><path d="M0 0h10l-5.0 7z" fill="#bdbdbd"/></svg>
<div class="a" style="left:866px;top:119px;width:104px;height:46px;border:1.5px solid #cfcfcf;border-radius:6px;background:linear-gradient(#fdfdfd,#f1f1f1);box-shadow:0 1px 0 rgba(0,0,0,.04)"></div>
<div class="a" style="left:942px;top:125px;width:1.5px;height:34px;background:#dcdcdc"></div>
<svg class="a" style="left:951px;top:138px;" width="10" height="7" viewBox="0 0 10 7"><path d="M0 0h10l-5.0 7z" fill="#bdbdbd"/></svg>
<div class="a" style="left:980px;top:119px;width:116px;height:46px;border:1.5px solid #cfcfcf;border-radius:6px;background:linear-gradient(#fdfdfd,#f1f1f1);box-shadow:0 1px 0 rgba(0,0,0,.04)"></div>
<div class="a" style="left:1038px;top:120px;width:1.5px;height:44px;background:#d6d6d6"></div>
<div class="t" style="left:990px;top:128.2px;font-size:28px;color:#9b9b9b;font-weight:normal;">A</div>
<svg class="a" style="left:1015px;top:137px;" width="15" height="7" viewBox="0 0 15 7"><path d="M0 7l7.5-7 7.5 7z" fill="#6f9fe0"/></svg>
<div class="t" style="left:1050px;top:133.3px;font-size:22px;color:#9b9b9b;font-weight:normal;">A</div>
<svg class="a" style="left:1070px;top:139px;" width="15" height="8" viewBox="0 0 15 8"><path d="M0 0h15l-7.5 8z" fill="#6f9fe0"/></svg>
<div class="a" style="left:1106px;top:119px;width:58px;height:46px;border:1.5px solid #cfcfcf;border-radius:6px;background:linear-gradient(#fdfdfd,#f1f1f1);box-shadow:0 1px 0 rgba(0,0,0,.04)"></div>
<div class="t" style="left:1116px;top:123.9px;font-size:26px;color:#9b9b9b;font-weight:normal;">A</div>
<svg class="a" style="left:1124px;top:130px;" width="32" height="31" viewBox="0 0 32 31"><path d="M8 28l-7-7 15-17c2-2 4-2 6 0l7 7c2 2 2 4 0 6L15 29z" fill="#e8b5c0" stroke="#c98a98" stroke-width="1"/><path d="M1 21l7 7" stroke="#c98a98" stroke-width="1"/><path d="M12 30h17" stroke="#ddd" stroke-width="1.5"/></svg>
<div class="a" style="left:584px;top:179px;width:492px;height:46px;border:1.5px solid #cfcfcf;border-radius:6px;background:linear-gradient(#fdfdfd,#f1f1f1);box-shadow:0 1px 0 rgba(0,0,0,.04)"></div>
<div class="a" style="left:642px;top:180px;width:1.5px;height:44px;background:#d6d6d6"></div>
<div class="a" style="left:700px;top:180px;width:1.5px;height:44px;background:#d6d6d6"></div>
<div class="a" style="left:758px;top:180px;width:1.5px;height:44px;background:#d6d6d6"></div>
<div class="a" style="left:816px;top:180px;width:1.5px;height:44px;background:#d6d6d6"></div>
<div class="a" style="left:874px;top:180px;width:1.5px;height:44px;background:#d6d6d6"></div>
<div class="a" style="left:932px;top:180px;width:1.5px;height:44px;background:#d6d6d6"></div>
<div class="a" style="left:1004px;top:180px;width:1.5px;height:44px;background:#d6d6d6"></div>
<div class="t" style="left:604px;top:191.2px;font-size:25px;color:#9b9b9b;font-weight:bold;">B</div>
<div class="t" style="left:664px;top:191.2px;font-size:25px;color:#9b9b9b;font-weight:bold;font-style:italic;font-family:Liberation Serif">I</div>
<div class="t" style="left:719px;top:189.4px;font-size:23px;color:#9b9b9b;font-weight:normal;">U</div>
<div class="a" style="left:719px;top:214px;width:20px;height:2px;background:#9b9b9b"></div>
<div class="t" style="left:768px;top:192.8px;font-size:19px;color:#9b9b9b;font-weight:normal;">abc</div>
<div class="a" style="left:768px;top:202px;width:38px;height:1.5px;background:#9b9b9b"></div>
<div class="t" style="left:831px;top:193.3px;font-size:22px;color:#9b9b9b;font-weight:normal;">X</div>
<div class="t" style="left:849px;top:188.9px;font-size:13px;color:#8fb4e6;font-weight:normal;">2</div>
<div class="t" style="left:889px;top:188.3px;font-size:22px;color:#9b9b9b;font-weight:normal;">X</div>
<div class="t" style="left:907px;top:201.9px;font-size:13px;color:#8fb4e6;font-weight:normal;">2</div>
<div class="t" style="left:946px;top:188.2px;font-size:15px;color:#9b9b9b;font-weight:normal;">AV</div>
<svg class="a" style="left:946px;top:205px;" width="32" height="8" viewBox="0 0 32 8"><path d="M4 4h24" stroke="#6f9fe0" stroke-width="1.6"/><path d="M0 4l5-4v8zM32 4l-5-4v8z" fill="#6f9fe0"/></svg>
<svg class="a" style="left:986px;top:198px;" width="9" height="7" viewBox="0 0 9 7"><path d="M0 0h9l-4.5 7z" fill="#b0b0b0"/></svg>
<div class="t" style="left:1016px;top:196.8px;font-size:19px;color:#9b9b9b;font-weight:normal;">A</div>
<div class="t" style="left:1031px;top:199.4px;font-size:16px;color:#9b9b9b;font-weight:normal;">a</div>
<svg class="a" style="left:1023px;top:190px;" width="18" height="9" viewBox="0 0 18 9"><path d="M1 8c2-6 9-7 13-3" fill="none" stroke="#6f9fe0" stroke-width="2"/><path d="M17 1v7h-6z" fill="#6f9fe0"/></svg>
<svg class="a" style="left:1058px;top:198px;" width="9" height="7" viewBox="0 0 9 7"><path d="M0 0h9l-4.5 7z" fill="#b0b0b0"/></svg>
<div class="a" style="left:1086px;top:179px;width:78px;height:46px;border:1.5px solid #cfcfcf;border-radius:6px;background:linear-gradient(#fdfdfd,#f1f1f1);box-shadow:0 1px 0 rgba(0,0,0,.04)"></div>
<div class="a" style="left:1140px;top:185px;width:1.5px;height:34px;background:#dcdcdc"></div>
<div class="t" style="left:1104px;top:186.8px;font-size:25px;color:#9b9b9b;font-weight:normal;">A</div>
<div class="a" style="left:1097px;top:211px;width:35px;height:9px;border:1px solid #e2e2e2;border-radius:2px;background:#f4f4f4"></div>
<svg class="a" style="left:1151px;top:198px;" width="9" height="7" viewBox="0 0 9 7"><path d="M0 0h9l-4.5 7z" fill="#b0b0b0"/></svg>
<div class="a" style="left:1182px;top:111px;width:2px;height:122px;background:#dadada"></div>
<div class="a" style="left:1200px;top:119px;width:153px;height:46px;border:1.5px solid #cfcfcf;border-radius:6px;background:linear-gradient(#fdfdfd,#f1f1f1);box-shadow:0 1px 0 rgba(0,0,0,.04)"></div>
<div class="a" style="left:1274px;top:120px;width:1.5px;height:44px;background:#d6d6d6"></div>
<div class="a" style="left:1250px;top:125px;width:1.5px;height:34px;background:#dcdcdc"></div>
<div class="a" style="left:1330px;top:125px;width:1.5px;height:34px;background:#dcdcdc"></div>
<svg class="a" style="left:1207px;top:127px;" width="32" height="26" viewBox="0 0 32 26"><circle cx="3.5" cy="3.5" r="3" fill="#6f9fe0" opacity=".8"/><circle cx="3.5" cy="13" r="3" fill="#6f9fe0" opacity=".8"/><circle cx="3.5" cy="22.5" r="3" fill="#6f9fe0" opacity=".8"/><path d="M12 3.5h19M12 13h19M12 22.5h19" stroke="#a8a8a8" stroke-width="2"/></svg>
<svg class="a" style="left:1257px;top:138px;" width="9" height="7" viewBox="0 0 9 7"><path d="M0 0h9l-4.5 7z" fill="#b0b0b0"/></svg>
<div class="t" style="left:1287px;top:127.5px;font-size:10px;color:#8fb4e6;font-weight:normal;">1</div>
<div class="t" style="left:1287px;top:137.0px;font-size:10px;color:#8fb4e6;font-weight:normal;">2</div>
<div class="t" style="left:1287px;top:146.5px;font-size:10px;color:#8fb4e6;font-weight:normal;">3</div>
<svg class="a" style="left:1299px;top:127px;" width="21" height="26" viewBox="0 0 21 26"><path d="M0 3.5h19M0 13h19M0 22.5h19" stroke="#a8a8a8" stroke-width="2"/></svg>
<svg class="a" style="left:1337px;top:138px;" width="9" height="7" viewBox="0 0 9 7"><path d="M0 0h9l-4.5 7z" fill="#b0b0b0"/></svg>
<div class="a" style="left:1364px;top:119px;width:116px;height:46px;border:1.5px solid #cfcfcf;border-radius:6px;background:linear-gradient(#fdfdfd,#f1f1f1);box-shadow:0 1px 0 rgba(0,0,0,.04)"></div>
<div class="a" style="left:1422px;top:120px;width:1.5px;height:44px;background:#d6d6d6"></div>
<svg class="a" style="left:1374px;top:130px;" width="36" height="22" viewBox="0 0 36 22"><path d="M0 11l9-9v5h7v8H9v5z" fill="#6f9fe0" opacity=".75"/><path d="M14 1.5h20M20 8h14M20 14h14M14 20.5h20" stroke="#a8a8a8" stroke-width="2"/></svg>
<svg class="a" style="left:1432px;top:130px;" width="36" height="22" viewBox="0 0 36 22"><path d="M17 11l-9-9v5H1v8h7v5z" fill="#6f9fe0" opacity=".75"/><path d="M14 1.5h20M20 8h14M20 14h14M14 20.5h20" stroke="#a8a8a8" stroke-width="2"/></svg>
<div class="a" style="left:1490px;top:119px;width:72px;height:46px;border:1.5px solid #cfcfcf;border-radius:6px;background:linear-gradient(#fdfdfd,#f1f1f1);box-shadow:0 1px 0 rgba(0,0,0,.04)"></div>
<svg class="a" style="left:1500px;top:127px;" width="38" height="28" viewBox="0 0 38 28"><path d="M7 0l7 7H10v4H4V7H0zM7 28l7-7H10v-4H4v4H0z" fill="#6f9fe0" opacity=".75"/><path d="M19 5h18M19 14h18M19 23h18" stroke="#a8a8a8" stroke-width="2"/></svg>
<svg class="a" style="left:1545px;top:138px;" width="9" height="7" viewBox="0 0 9 7"><path d="M0 0h9l-4.5 7z" fill="#b0b0b0"/></svg>
<div class="a" style="left:1572px;top:119px;width:72px;height:46px;border:1.5px solid #cfcfcf;border-radius:6px;background:linear-gradient(#fdfdfd,#f1f1f1);box-shadow:0 1px 0 rgba(0,0,0,.04)"></div>
<svg class="a" style="left:1584px;top:127px;" width="34" height="30" viewBox="0 0 34 30"><rect x="0.5" y="0.5" width="33" height="29" fill="#fff" stroke="#bdbdbd"/><path d="M5 6h10M5 11h10M5 16h10M5 21h10M19 6h10M19 11h10M19 16h10M19 21h10" stroke="#9fd08e" stroke-width="2"/></svg>
<svg class="a" style="left:1627px;top:138px;" width="9" height="7" viewBox="0 0 9 7"><path d="M0 0h9l-4.5 7z" fill="#b0b0b0"/></svg>
<svg class="a" style="left:1668px;top:127px;" width="60" height="43" viewBox="0 0 60 43"><path d="M0 0h38l13 17-13 17H0l12-17z" fill="#b9dcae" opacity=".85"/><rect x="20" y="14" width="37.5" height="27.5" fill="#fbfbfb" stroke="#c3c3c3"/><path d="M26 22h3M32 22h20M26 28h3M32 28h20M26 34h3M32 34h20" stroke="#c9c9c9" stroke-width="1.8"/></svg>
<svg class="a" style="left:1742px;top:144px;" width="9" height="7" viewBox="0 0 9 7"><path d="M0 0h9l-4.5 7z" fill="#b0b0b0"/></svg>
<div class="t" style="left:1656px;top:189.5px;font-size:21.5px;color:#9b9b9b;font-weight:normal;">Convert to</div>
<div class="t" style="left:1663px;top:212.7px;font-size:21.5px;color:#9b9b9b;font-weight:normal;">SmartArt</div>
<div class="a" style="left:1200px;top:179px;width:232px;height:46px;border:1.5px solid #cfcfcf;border-radius:6px;background:linear-gradient(#fdfdfd,#f1f1f1);box-shadow:0 1px 0 rgba(0,0,0,.04)"></div>
<div class="a" style="left:1258px;top:180px;width:1.5px;height:44px;background:#d6d6d6"></div>
<div class="a" style="left:1316px;top:180px;width:1.5px;height:44px;background:#d6d6d6"></div>
<div class="a" style="left:1374px;top:180px;width:1.5px;height:44px;background:#d6d6d6"></div>
<svg class="a" style="left:1215px;top:190px;" width="30" height="26" viewBox="0 0 30 26"><path d="M0 4.0h30" stroke="#a8a8a8" stroke-width="2"/><path d="M0 10.3h22" stroke="#a8a8a8" stroke-width="2"/><path d="M0 16.6h30" stroke="#a8a8a8" stroke-width="2"/><path d="M0 22.9h22" stroke="#a8a8a8" stroke-width="2"/></svg>
<svg class="a" style="left:1273px;top:190px;" width="30" height="26" viewBox="0 0 30 26"><path d="M0.0 4.0h30" stroke="#a8a8a8" stroke-width="2"/><path d="M4.0 10.3h22" stroke="#a8a8a8" stroke-width="2"/><path d="M0.0 16.6h30" stroke="#a8a8a8" stroke-width="2"/><path d="M4.0 22.9h22" stroke="#a8a8a8" stroke-width="2"/></svg>
<svg class="a" style="left:1331px;top:190px;" width="30" height="26" viewBox="0 0 30 26"><path d="M0 4.0h30" stroke="#a8a8a8" stroke-width="2"/><path d="M8 10.3h22" stroke="#a8a8a8" stroke-width="2"/><path d="M0 16.6h30" stroke="#a8a8a8" stroke-width="2"/><path d="M8 22.9h22" stroke="#a8a8a8" stroke-width="2"/></svg>
<svg class="a" style="left:1389px;top:190px;" width="30" height="26" viewBox="0 0 30 26"><path d="M0 4.0h29" stroke="#a8a8a8" stroke-width="2"/><path d="M0 10.3h29" stroke="#a8a8a8" stroke-width="2"/><path d="M0 16.6h29" stroke="#a8a8a8" stroke-width="2"/><path d="M0 22.9h29" stroke="#a8a8a8" stroke-width="2"/></svg>
<div class="a" style="left:1442px;top:179px;width:144px;height:46px;border:1.5px solid #cfcfcf;border-radius:6px;background:linear-gradient(#fdfdfd,#f1f1f1);box-shadow:0 1px 0 rgba(0,0,0,.04)"></div>
<div class="a" style="left:1514px;top:180px;width:1.5px;height:44px;background:#d6d6d6"></div>
<svg class="a" style="left:1452px;top:186px;" width="44" height="34" viewBox="0 0 44 34"><path d="M3 2v28M12 2v28M22 14v16M32 14v16" stroke="#a8a8a8" stroke-width="1.8"/><path d="M0 27l3 5 3-5zM9 27l3 5 3-5zM19 27l3 5 3-5zM29 27l3 5 3-5z" fill="#a8a8a8"/></svg>
<div class="t" style="left:1476px;top:187.6px;font-size:17px;color:#8fb4e6;font-weight:normal;">A</div>
<svg class="a" style="left:1496px;top:198px;" width="9" height="7" viewBox="0 0 9 7"><path d="M0 0h9l-4.5 7z" fill="#b0b0b0"/></svg>
<svg class="a" style="left:1525px;top:187px;" width="36" height="30" viewBox="0 0 36 30"><rect x="0.5" y="0.5" width="34" height="29" fill="#fff" stroke="#bdbdbd"/><path d="M5 7h22M5 13h16" stroke="#bdbdbd" stroke-width="2"/></svg>
<svg class="a" style="left:1569px;top:198px;" width="9" height="7" viewBox="0 0 9 7"><path d="M0 0h9l-4.5 7z" fill="#b0b0b0"/></svg>
<div class="a" style="left:1781px;top:111px;width:2px;height:122px;background:#dadada"></div>
<svg class="a" style="left:1809px;top:125px;" width="55" height="47" viewBox="0 0 55 47"><rect x="0.5" y="0.5" width="53" height="45" fill="#fff" stroke="#777" stroke-width="1"/><circle cx="38.5" cy="12.5" r="5.5" fill="#e9b44c"/><path d="M6 39V29c4-6 9-9 13-5s8 8 13 6 8-6 10-4 4 2 6 0v13z" fill="#9fc88c"/><rect x="0.5" y="44" width="53" height="2" fill="#ccc"/></svg>
<svg class="a" style="left:1874px;top:143px;" width="10" height="8" viewBox="0 0 10 8"><path d="M0 0h10l-5.0 8z" fill="#555"/></svg>
<div class="t" style="left:1809px;top:188.9px;font-size:22.5px;color:#111;font-weight:normal;">Picture</div>
<svg class="a" style="left:1912px;top:120px;" width="54" height="57" viewBox="0 0 54 57"><circle cx="35" cy="15" r="13.5" fill="#e6effa" stroke="#6d9ee0" stroke-width="1.2"/><rect x="0.5" y="13" width="30" height="29" fill="#dfeaf8" stroke="#6d9ee0" stroke-width="1.2"/><path d="M35 22l17 17-17 17-17-17z" fill="#e9f0fa" stroke="#6d9ee0" stroke-width="1.2"/></svg>
<svg class="a" style="left:1976px;top:143px;" width="10" height="8" viewBox="0 0 10 8"><path d="M0 0h10l-5.0 8z" fill="#555"/></svg>
<div class="t" style="left:1909px;top:188.9px;font-size:22.5px;color:#111;font-weight:normal;">Shapes</div>
<svg class="a" style="left:2011px;top:124px;" width="57" height="49" viewBox="0 0 57 49"><rect x="4.5" y="4.5" width="48" height="40" fill="#fff" stroke="#333" stroke-width="1.2"/><text x="9" y="24" font-family="Liberation Sans" font-weight="bold" font-size="17" fill="#222">A</text><path d="M24 12h20M24 17h20M24 22h20M10 30h34M10 36h34" stroke="#aaa" stroke-width="1.5"/><circle cx="4.5" cy="4.5" r="4" fill="#4a86d8"/><circle cx="52.5" cy="4.5" r="4" fill="#4a86d8"/><circle cx="4.5" cy="44.5" r="4" fill="#4a86d8"/><circle cx="52.5" cy="44.5" r="4" fill="#4a86d8"/></svg>
<div class="t" style="left:2019px;top:188.9px;font-size:22.5px;color:#111;font-weight:normal;">Text</div>
<div class="t" style="left:2021px;top:212.3px;font-size:22.5px;color:#111;font-weight:normal;">Box</div>
<div class="a" style="left:2094px;top:111px;width:2px;height:122px;background:#dadada"></div>
<svg class="a" style="left:2124px;top:122px;" width="52" height="51" viewBox="0 0 52 51"><rect x="6" y="6" width="40" height="40" fill="#f7d26d"/><rect x="1" y="1" width="17" height="17" fill="#fff" stroke="#555" stroke-width="1"/><rect x="33" y="33" width="17" height="17" fill="#fff" stroke="#555" stroke-width="1"/></svg>
<svg class="a" style="left:2189px;top:143px;" width="10" height="8" viewBox="0 0 10 8"><path d="M0 0h10l-5.0 8z" fill="#555"/></svg>
<div class="t" style="left:2119px;top:188.9px;font-size:22.5px;color:#111;font-weight:normal;">Arrange</div>
<svg class="a" style="left:2220px;top:124px;" width="66" height="53" viewBox="0 0 66 53"><rect x="1" y="1" width="45" height="45" rx="8" fill="#f6f6f6" stroke="#cfcfcf" stroke-width="1.2"/><path d="M28 36L48 10c2-3 5-3 4 1L34 40z" fill="#f4f4f4" stroke="#d2d2d2" stroke-width="1"/><path d="M22 34c5-3 10-1 12 4 1 5-5 10-13 11-5 0-8-1-7-4 3-2 4-6 8-11z" fill="#e2cfb5"/><path d="M14 45c3 1 8 1 12-1 2-1 4-4 5-6 0 5-6 10-13 11-5 0-7-1-4-4z" fill="#a8c4ea"/></svg>
<svg class="a" style="left:2291px;top:143px;" width="10" height="8" viewBox="0 0 10 8"><path d="M0 0h10l-5.0 8z" fill="#bcbcbc"/></svg>
<div class="t" style="left:2233px;top:188.9px;font-size:22.5px;color:#9b9b9b;font-weight:normal;">Quick</div>
<div class="t" style="left:2231px;top:212.3px;font-size:22.5px;color:#9b9b9b;font-weight:normal;">Styles</div>
<svg class="a" style="left:2327px;top:121px;" width="38" height="40" viewBox="0 0 38 40"><path d="M8 16l9-9 10 10-9 9z" fill="#f4f4f4" stroke="#c8c8c8" stroke-width="1.5"/><path d="M17 7V2" stroke="#c8c8c8" stroke-width="1.5"/><path d="M27 17c2 3 3 5 3 7s-2 3-3 1" fill="#9cc0ea" stroke="#9cc0ea"/><rect x="0.5" y="30" width="36" height="9" rx="2" fill="#f6f6f6" stroke="#e2e2e2"/></svg>
<div class="t" style="left:2375px;top:131.7px;font-size:21.5px;color:#9b9b9b;font-weight:normal;">Shape Fill</div>
<svg class="a" style="left:2484px;top:138px;" width="10" height="7" viewBox="0 0 10 7"><path d="M0 0h10l-5.0 7z" fill="#bcbcbc"/></svg>
<svg class="a" style="left:2327px;top:183px;" width="38" height="38" viewBox="0 0 38 38"><path d="M3 24L20 7l6 6L9 30H3z" fill="#9fc0ea"/><path d="M20 7l4-4c1-1 3-1 4 0l2 2c1 1 1 3 0 4l-4 4z" fill="#9fc0ea"/><path d="M3 24l6 6H1z" fill="#999"/><rect x="0.5" y="28" width="36" height="9" rx="2" fill="#f6f6f6" stroke="#e2e2e2"/></svg>
<div class="t" style="left:2375px;top:191.5px;font-size:21.5px;color:#9b9b9b;font-weight:normal;">Shape Outline</div>
<svg class="a" style="left:2529px;top:198px;" width="10" height="7" viewBox="0 0 10 7"><path d="M0 0h10l-5.0 7z" fill="#bcbcbc"/></svg>
<svg class="a" style="left:457px;top:244px;" width="2903" height="34" viewBox="0 0 2903 34"><rect x="118.94" y="22" width="1.5" height="8" fill="#a9a9a9"/><rect x="144.50" y="12" width="1.5" height="18" fill="#a9a9a9"/><rect x="170.06" y="22" width="1.5" height="8" fill="#a9a9a9"/><rect x="195.62" y="22" width="1.5" height="8" fill="#a9a9a9"/><rect x="221.19" y="22" width="1.5" height="8" fill="#a9a9a9"/><rect x="246.75" y="22" width="1.5" height="8" fill="#a9a9a9"/><text x="247.50" y="18.5" font-family="Liberation Sans" font-size="17.5" fill="#767676" text-anchor="middle">6</text><rect x="272.31" y="22" width="1.5" height="8" fill="#a9a9a9"/><rect x="297.88" y="22" width="1.5" height="8" fill="#a9a9a9"/><rect x="323.44" y="22" width="1.5" height="8" fill="#a9a9a9"/><rect x="349.00" y="12" width="1.5" height="18" fill="#a9a9a9"/><rect x="374.56" y="22" width="1.5" height="8" fill="#a9a9a9"/><rect x="400.12" y="22" width="1.5" height="8" fill="#a9a9a9"/><rect x="425.69" y="22" width="1.5" height="8" fill="#a9a9a9"/><rect x="451.25" y="22" width="1.5" height="8" fill="#a9a9a9"/><text x="452.00" y="18.5" font-family="Liberation Sans" font-size="17.5" fill="#767676" text-anchor="middle">5</text><rect x="476.81" y="22" width="1.5" height="8" fill="#a9a9a9"/><rect x="502.38" y="22" width="1.5" height="8" fill="#a9a9a9"/><rect x="527.94" y="22" width="1.5" height="8" fill="#a9a9a9"/><rect x="553.50" y="12" width="1.5" height="18" fill="#a9a9a9"/><rect x="579.06" y="22" width="1.5" height="8" fill="#a9a9a9"/><rect x="604.62" y="22" width="1.5" height="8" fill="#a9a9a9"/><rect x="630.19" y="22" width="1.5" height="8" fill="#a9a9a9"/><rect x="655.75" y="22" width="1.5" height="8" fill="#a9a9a9"/><text x="656.50" y="18.5" font-family="Liberation Sans" font-size="17.5" fill="#767676" text-anchor="middle">4</text><rect x="681.31" y="22" width="1.5" height="8" fill="#a9a9a9"/><rect x="706.88" y="22" width="1.5" height="8" fill="#a9a9a9"/><rect x="732.44" y="22" width="1.5" height="8" fill="#a9a9a9"/><rect x="758.00" y="12" width="1.5" height="18" fill="#a9a9a9"/><rect x="783.56" y="22" width="1.5" height="8" fill="#a9a9a9"/><rect x="809.12" y="22" width="1.5" height="8" fill="#a9a9a9"/><rect x="834.69" y="22" width="1.5" height="8" fill="#a9a9a9"/><rect x="860.25" y="22" width="1.5" height="8" fill="#a9a9a9"/><text x="861.00" y="18.5" font-family="Liberation Sans" font-size="17.5" fill="#767676" text-anchor="middle">3</text><rect x="885.81" y="22" width="1.5" height="8" fill="#a9a9a9"/><rect x="911.38" y="22" width="1.5" height="8" fill="#a9a9a9"/><rect x="936.94" y="22" width="1.5" height="8" fill="#a9a9a9"/><rect x="962.50" y="12" width="1.5" height="18" fill="#a9a9a9"/><rect x="988.06" y="22" width="1.5" height="8" fill="#a9a9a9"/><rect x="1013.62" y="22" width="1.5" height="8" fill="#a9a9a9"/><rect x="1039.19" y="22" width="1.5" height="8" fill="#a9a9a9"/><rect x="1064.75" y="22" width="1.5" height="8" fill="#a9a9a9"/><text x="1065.50" y="18.5" font-family="Liberation Sans" font-size="17.5" fill="#767676" text-anchor="middle">2</text><rect x="1090.31" y="22" width="1.5" height="8" fill="#a9a9a9"/><rect x="1115.88" y="22" width="1.5" height="8" fill="#a9a9a9"/><rect x="1141.44" y="22" width="1.5" height="8" fill="#a9a9a9"/><rect x="1167.00" y="12" width="1.5" height="18" fill="#a9a9a9"/><rect x="1192.56" y="22" width="1.5" height="8" fill="#a9a9a9"/><rect x="1218.12" y="22" width="1.5" height="8" fill="#a9a9a9"/><rect x="1243.69" y="22" width="1.5" height="8" fill="#a9a9a9"/><rect x="1269.25" y="22" width="1.5" height="8" fill="#a9a9a9"/><text x="1270.00" y="18.5" font-family="Liberation Sans" font-size="17.5" fill="#767676" text-anchor="middle">1</text><rect x="1294.81" y="22" width="1.5" height="8" fill="#a9a9a9"/><rect x="1320.38" y="22" width="1.5" height="8" fill="#a9a9a9"/><rect x="1345.94" y="22" width="1.5" height="8" fill="#a9a9a9"/><rect x="1371.50" y="12" width="1.5" height="18" fill="#a9a9a9"/><rect x="1397.06" y="22" width="1.5" height="8" fill="#a9a9a9"/><rect x="1422.62" y="22" width="1.5" height="8" fill="#a9a9a9"/><rect x="1448.19" y="22" width="1.5" height="8" fill="#a9a9a9"/><rect x="1473.75" y="22" width="1.5" height="8" fill="#a9a9a9"/><text x="1474.50" y="18.5" font-family="Liberation Sans" font-size="17.5" fill="#767676" text-anchor="middle">0</text><rect x="1499.31" y="22" width="1.5" height="8" fill="#a9a9a9"/><rect x="1524.88" y="22" width="1.5" height="8" fill="#a9a9a9"/><rect x="1550.44" y="22" width="1.5" height="8" fill="#a9a9a9"/><rect x="1576.00" y="12" width="1.5" height="18" fill="#a9a9a9"/><rect x="1601.56" y="22" width="1.5" height="8" fill="#a9a9a9"/><rect x="1627.12" y="22" width="1.5" height="8" fill="#a9a9a9"/><rect x="1652.69" y="22" width="1.5" height="8" fill="#a9a9a9"/><rect x="1678.25" y="22" width="1.5" height="8" fill="#a9a9a9"/><text x="1679.00" y="18.5" font-family="Liberation Sans" font-size="17.5" fill="#767676" text-anchor="middle">1</text><rect x="1703.81" y="22" width="1.5" height="8" fill="#a9a9a9"/><rect x="1729.38" y="22" width="1.5" height="8" fill="#a9a9a9"/><rect x="1754.94" y="22" width="1.5" height="8" fill="#a9a9a9"/><rect x="1780.50" y="12" width="1.5" height="18" fill="#a9a9a9"/><rect x="1806.06" y="22" width="1.5" height="8" fill="#a9a9a9"/><rect x="1831.62" y="22" width="1.5" height="8" fill="#a9a9a9"/><rect x="1857.19" y="22" width="1.5" height="8" fill="#a9a9a9"/><rect x="1882.75" y="22" width="1.5" height="8" fill="#a9a9a9"/><text x="1883.50" y="18.5" font-family="Liberation Sans" font-size="17.5" fill="#767676" text-anchor="middle">2</text><rect x="1908.31" y="22" width="1.5" height="8" fill="#a9a9a9"/><rect x="1933.88" y="22" width="1.5" height="8" fill="#a9a9a9"/><rect x="1959.44" y="22" width="1.5" height="8" fill="#a9a9a9"/><rect x="1985.00" y="12" width="1.5" height="18" fill="#a9a9a9"/><rect x="2010.56" y="22" width="1.5" height="8" fill="#a9a9a9"/><rect x="2036.12" y="22" width="1.5" height="8" fill="#a9a9a9"/><rect x="2061.69" y="22" width="1.5" height="8" fill="#a9a9a9"/><rect x="2087.25" y="22" width="1.5" height="8" fill="#a9a9a9"/><text x="2088.00" y="18.5" font-family="Liberation Sans" font-size="17.5" fill="#767676" text-anchor="middle">3</text><rect x="2112.81" y="22" width="1.5" height="8" fill="#a9a9a9"/><rect x="2138.38" y="22" width="1.5" height="8" fill="#a9a9a9"/><rect x="2163.94" y="22" width="1.5" height="8" fill="#a9a9a9"/><rect x="2189.50" y="12" width="1.5" height="18" fill="#a9a9a9"/><rect x="2215.06" y="22" width="1.5" height="8" fill="#a9a9a9"/><rect x="2240.62" y="22" width="1.5" height="8" fill="#a9a9a9"/><rect x="2266.19" y="22" width="1.5" height="8" fill="#a9a9a9"/><rect x="2291.75" y="22" width="1.5" height="8" fill="#a9a9a9"/><text x="2292.50" y="18.5" font-family="Liberation Sans" font-size="17.5" fill="#767676" text-anchor="middle">4</text><rect x="2317.31" y="22" width="1.5" height="8" fill="#a9a9a9"/><rect x="2342.88" y="22" width="1.5" height="8" fill="#a9a9a9"/><rect x="2368.44" y="22" width="1.5" height="8" fill="#a9a9a9"/><rect x="2394.00" y="12" width="1.5" height="18" fill="#a9a9a9"/><rect x="2419.56" y="22" width="1.5" height="8" fill="#a9a9a9"/><rect x="2445.12" y="22" width="1.5" height="8" fill="#a9a9a9"/><rect x="2470.69" y="22" width="1.5" height="8" fill="#a9a9a9"/><rect x="2496.25" y="22" width="1.5" height="8" fill="#a9a9a9"/><text x="2497.00" y="18.5" font-family="Liberation Sans" font-size="17.5" fill="#767676" text-anchor="middle">5</text><rect x="2521.81" y="22" width="1.5" height="8" fill="#a9a9a9"/><rect x="2547.38" y="22" width="1.5" height="8" fill="#a9a9a9"/><rect x="2572.94" y="22" width="1.5" height="8" fill="#a9a9a9"/><rect x="2598.50" y="12" width="1.5" height="18" fill="#a9a9a9"/><rect x="2624.06" y="22" width="1.5" height="8" fill="#a9a9a9"/><rect x="2649.62" y="22" width="1.5" height="8" fill="#a9a9a9"/><rect x="2675.19" y="22" width="1.5" height="8" fill="#a9a9a9"/><rect x="2700.75" y="22" width="1.5" height="8" fill="#a9a9a9"/><text x="2701.50" y="18.5" font-family="Liberation Sans" font-size="17.5" fill="#767676" text-anchor="middle">6</text><rect x="2726.31" y="22" width="1.5" height="8" fill="#a9a9a9"/><rect x="2751.88" y="22" width="1.5" height="8" fill="#a9a9a9"/><rect x="2777.44" y="22" width="1.5" height="8" fill="#a9a9a9"/><rect x="2803.00" y="12" width="1.5" height="18" fill="#a9a9a9"/><rect x="2828.56" y="22" width="1.5" height="8" fill="#a9a9a9"/><rect x="113.25" y="8" width="1.5" height="30" fill="#a0a0a0"/><rect x="2831.25" y="8" width="1.5" height="30" fill="#a0a0a0"/></svg>
<svg class="a" style="left:457px;top:276px;" width="33" height="1631" viewBox="0 0 33 1631"><rect x="23" y="80.44" width="8" height="1.5" fill="#a9a9a9"/><rect x="13" y="106.00" width="18" height="1.5" fill="#a9a9a9"/><rect x="23" y="131.56" width="8" height="1.5" fill="#a9a9a9"/><rect x="23" y="157.12" width="8" height="1.5" fill="#a9a9a9"/><rect x="23" y="182.69" width="8" height="1.5" fill="#a9a9a9"/><rect x="23" y="208.25" width="8" height="1.5" fill="#a9a9a9"/><text x="0" y="0" font-family="Liberation Sans" font-size="17.5" fill="#767676" text-anchor="middle" transform="translate(18.5 209.00) rotate(-90)">3</text><rect x="23" y="233.81" width="8" height="1.5" fill="#a9a9a9"/><rect x="23" y="259.38" width="8" height="1.5" fill="#a9a9a9"/><rect x="23" y="284.94" width="8" height="1.5" fill="#a9a9a9"/><rect x="13" y="310.50" width="18" height="1.5" fill="#a9a9a9"/><rect x="23" y="336.06" width="8" height="1.5" fill="#a9a9a9"/><rect x="23" y="361.62" width="8" height="1.5" fill="#a9a9a9"/><rect x="23" y="387.19" width="8" height="1.5" fill="#a9a9a9"/><rect x="23" y="412.75" width="8" height="1.5" fill="#a9a9a9"/><text x="0" y="0" font-family="Liberation Sans" font-size="17.5" fill="#767676" text-anchor="middle" transform="translate(18.5 413.50) rotate(-90)">2</text><rect x="23" y="438.31" width="8" height="1.5" fill="#a9a9a9"/><rect x="23" y="463.88" width="8" height="1.5" fill="#a9a9a9"/><rect x="23" y="489.44" width="8" height="1.5" fill="#a9a9a9"/><rect x="13" y="515.00" width="18" height="1.5" fill="#a9a9a9"/><rect x="23" y="540.56" width="8" height="1.5" fill="#a9a9a9"/><rect x="23" y="566.12" width="8" height="1.5" fill="#a9a9a9"/><rect x="23" y="591.69" width="8" height="1.5" fill="#a9a9a9"/><rect x="23" y="617.25" width="8" height="1.5" fill="#a9a9a9"/><text x="0" y="0" font-family="Liberation Sans" font-size="17.5" fill="#767676" text-anchor="middle" transform="translate(18.5 618.00) rotate(-90)">1</text><rect x="23" y="642.81" width="8" height="1.5" fill="#a9a9a9"/><rect x="23" y="668.38" width="8" height="1.5" fill="#a9a9a9"/><rect x="23" y="693.94" width="8" height="1.5" fill="#a9a9a9"/><rect x="13" y="719.50" width="18" height="1.5" fill="#a9a9a9"/><rect x="23" y="745.06" width="8" height="1.5" fill="#a9a9a9"/><rect x="23" y="770.62" width="8" height="1.5" fill="#a9a9a9"/><rect x="23" y="796.19" width="8" height="1.5" fill="#a9a9a9"/><rect x="23" y="821.75" width="8" height="1.5" fill="#a9a9a9"/><text x="0" y="0" font-family="Liberation Sans" font-size="17.5" fill="#767676" text-anchor="middle" transform="translate(18.5 822.50) rotate(-90)">0</text><rect x="23" y="847.31" width="8" height="1.5" fill="#a9a9a9"/><rect x="23" y="872.88" width="8" height="1.5" fill="#a9a9a9"/><rect x="23" y="898.44" width="8" height="1.5" fill="#a9a9a9"/><rect x="13" y="924.00" width="18" height="1.5" fill="#a9a9a9"/><rect x="23" y="949.56" width="8" height="1.5" fill="#a9a9a9"/><rect x="23" y="975.12" width="8" height="1.5" fill="#a9a9a9"/><rect x="23" y="1000.69" width="8" height="1.5" fill="#a9a9a9"/><rect x="23" y="1026.25" width="8" height="1.5" fill="#a9a9a9"/><text x="0" y="0" font-family="Liberation Sans" font-size="17.5" fill="#767676" text-anchor="middle" transform="translate(18.5 1027.00) rotate(-90)">1</text><rect x="23" y="1051.81" width="8" height="1.5" fill="#a9a9a9"/><rect x="23" y="1077.38" width="8" height="1.5" fill="#a9a9a9"/><rect x="23" y="1102.94" width="8" height="1.5" fill="#a9a9a9"/><rect x="13" y="1128.50" width="18" height="1.5" fill="#a9a9a9"/><rect x="23" y="1154.06" width="8" height="1.5" fill="#a9a9a9"/><rect x="23" y="1179.62" width="8" height="1.5" fill="#a9a9a9"/><rect x="23" y="1205.19" width="8" height="1.5" fill="#a9a9a9"/><rect x="23" y="1230.75" width="8" height="1.5" fill="#a9a9a9"/><text x="0" y="0" font-family="Liberation Sans" font-size="17.5" fill="#767676" text-anchor="middle" transform="translate(18.5 1231.50) rotate(-90)">2</text><rect x="23" y="1256.31" width="8" height="1.5" fill="#a9a9a9"/><rect x="23" y="1281.88" width="8" height="1.5" fill="#a9a9a9"/><rect x="23" y="1307.44" width="8" height="1.5" fill="#a9a9a9"/><rect x="13" y="1333.00" width="18" height="1.5" fill="#a9a9a9"/><rect x="23" y="1358.56" width="8" height="1.5" fill="#a9a9a9"/><rect x="23" y="1384.12" width="8" height="1.5" fill="#a9a9a9"/><rect x="23" y="1409.69" width="8" height="1.5" fill="#a9a9a9"/><rect x="23" y="1435.25" width="8" height="1.5" fill="#a9a9a9"/><text x="0" y="0" font-family="Liberation Sans" font-size="17.5" fill="#767676" text-anchor="middle" transform="translate(18.5 1436.00) rotate(-90)">3</text><rect x="23" y="1460.81" width="8" height="1.5" fill="#a9a9a9"/><rect x="23" y="1486.38" width="8" height="1.5" fill="#a9a9a9"/><rect x="23" y="1511.94" width="8" height="1.5" fill="#a9a9a9"/><rect x="13" y="1537.50" width="18" height="1.5" fill="#a9a9a9"/><rect x="23" y="1563.06" width="8" height="1.5" fill="#a9a9a9"/><rect x="9" y="56.25" width="30" height="1.5" fill="#a0a0a0"/><rect x="9" y="1584.25" width="30" height="1.5" fill="#a0a0a0"/><rect x="0" y="327" width="33" height="2" fill="#6a6a6a"/></svg>
<div class="a th" style="left:0;top:244px;width:455px;height:1766px;overflow:hidden">
<div class="a" style="left:0;top:-244px;width:455px;height:2056px">
<div class="a" style="left:63px;top:200px;width:350px;height:206px;background:#fff;border:1.5px solid #c6c6c6"></div>
<div class="t" style="left:-262.5px;width:1000px;text-align:center;top:260.9px;font-size:19px;color:#111;font-weight:normal;">Baymard Institute Best</div>
<div class="t" style="left:-262.5px;width:1000px;text-align:center;top:284.4px;font-size:18.4px;color:#111;font-weight:normal;">Practice Research</div>
<div class="t" style="left:-262.5px;width:1000px;text-align:center;top:310.9px;font-size:8.3px;color:#111;font-weight:normal;">https://baymard.com/premium/themes</div>
<div class="a" style="left:63px;top:434px;width:350px;height:202px;background:#fff;border:1.5px solid #c6c6c6"></div>
<div class="t" style="left:22px;top:432.9px;font-size:26px;color:#555;font-weight:bold;">2</div>
<div class="t" style="left:94px;top:459.4px;font-size:13.7px;color:#222;font-weight:normal;">Purpose</div>
<div class="t" style="left:94px;top:490.5px;font-size:8.8px;color:#111;font-weight:normal;">• Assess Pepsi Ecommerce sites (Pantry Shop and Teamzone) against</div>
<div class="t" style="left:100px;top:502.5px;font-size:8.8px;color:#111;font-weight:normal;">Baymard Institute's research findings around ecommerce.</div>
<div class="t" style="left:94px;top:517.5px;font-size:8.8px;color:#111;font-weight:normal;">• Gather insight around best practices and provide</div>
<div class="t" style="left:100px;top:529.0px;font-size:8.8px;color:#111;font-weight:normal;">suggestions for improvements to Pepsi Ecommerce sites</div>
<div class="a" style="left:63px;top:664px;width:350px;height:202px;background:#fff;border:1.5px solid #c6c6c6"></div>
<div class="t" style="left:22px;top:663.9px;font-size:26px;color:#555;font-weight:bold;">3</div>
<div class="t" style="left:94px;top:690.1px;font-size:13.7px;color:#222;font-weight:normal;">Hypothesis</div>
<div class="t" style="left:94px;top:720.3px;font-size:9.1px;color:#111;font-weight:normal;">If we improve the users experience by applying best practices to</div>
<div class="t" style="left:94px;top:732.3px;font-size:9.1px;color:#111;font-weight:normal;">maximize the ability to place orders as well as reduce cognitive load by</div>
<div class="t" style="left:94px;top:743.3px;font-size:9.1px;color:#111;font-weight:normal;">20-60% by simplifying the checkout process, then we should expect to</div>
<div class="t" style="left:94px;top:754.3px;font-size:9.1px;color:#111;font-weight:normal;">see an increase in successful orders being placed and a more pleasant</div>
<div class="t" style="left:94px;top:765.3px;font-size:9.1px;color:#111;font-weight:normal;">experience with Pepsi Ecommerce sites.</div>
<div class="a" style="left:63px;top:894px;width:350px;height:202px;background:#fff;border:1.5px solid #c6c6c6"></div>
<div class="t" style="left:22px;top:893.9px;font-size:26px;color:#555;font-weight:bold;">4</div>
<div class="t" style="left:78px;top:907.1px;font-size:7.5px;color:#111;font-weight:bold;">Cart – Add to Cart</div>
<div class="t" style="left:78px;top:931.8px;font-size:5.94px;color:#222;font-weight:normal;">Increased visibility of product being added to</div>
<div class="t" style="left:78px;top:940.8px;font-size:5.94px;color:#222;font-weight:normal;">cart helps let user know item(s) are in cart and</div>
<div class="t" style="left:78px;top:948.9px;font-size:5.94px;color:#222;font-weight:normal;">doesn't disrupt shopping flow.</div>
<div class="t" style="left:78px;top:963.6px;font-size:5.94px;color:#222;font-weight:normal;">Show some sort of a notification with basic actions:</div>
<div class="t" style="left:78px;top:971.6px;font-size:5.94px;color:#222;font-weight:normal;">continue shopping, go to the cart, skip cart.</div>
<div class="t" style="left:78px;top:987.6px;font-size:5.94px;color:#222;font-weight:normal;">It's crucial to always provide a clear path to the cart</div>
<div class="t" style="left:78px;top:994.6px;font-size:5.94px;color:#222;font-weight:normal;">after users add an item.</div>
<div class="t" style="left:78px;top:1009.7px;font-size:4.5px;color:#222;font-weight:normal;">Reference:</div>
<div class="a" style="left:78px;top:1016px;width:85px;height:2px;background:#2a5fc0"></div>
<div class="a" style="left:78px;top:1021px;width:86px;height:2px;background:#2a5fc0"></div>
<div class="a" style="left:220px;top:904px;width:181px;height:113px;background:#fff;border:1px solid #222"></div>
<div class="a" style="left:221px;top:905.5px;width:179px;height:3.5px;background:#d6eefa"></div>
<div class="a" style="left:221px;top:909px;width:179px;height:7px;background:#1b3b78"></div>
<div class="a" style="left:223px;top:911px;width:17px;height:2.5px;background:#e8e8f0"></div>
<div class="a" style="left:246px;top:912px;width:8px;height:1.5px;background:#c8d0e0"></div>
<div class="a" style="left:262px;top:912px;width:8px;height:1.5px;background:#c8d0e0"></div>
<div class="a" style="left:277px;top:912px;width:8px;height:1.5px;background:#c8d0e0"></div>
<div class="a" style="left:292px;top:912px;width:8px;height:1.5px;background:#c8d0e0"></div>
<div class="a" style="left:362px;top:912px;width:15px;height:1.5px;background:#c8d0e0"></div>
<div class="a" style="left:380px;top:912px;width:10px;height:1.5px;background:#c8d0e0"></div>
<div class="t" style="left:-189px;width:1000px;text-align:center;top:924.8px;font-size:4.4px;color:#d9683e;font-weight:normal;font-family:Liberation Serif">Everyday Pantry Kits</div>
<div class="a" style="left:263px;top:947px;width:22px;height:16px;background:#d9a766;border-radius:0.5px"></div>
<div class="a" style="left:261px;top:946px;width:26px;height:2px;background:#e6b87a"></div>
<div class="a" style="left:267px;top:939px;width:4px;height:8px;background:#b98a58;border-radius:1px"></div>
<div class="a" style="left:273px;top:939px;width:4px;height:8px;background:#b98a58;border-radius:1px"></div>
<div class="a" style="left:259px;top:954px;width:7px;height:11px;background:#5a3a8a"></div>
<div class="a" style="left:262px;top:940px;width:5px;height:7px;background:#4aa0d8"></div>
<div class="a" style="left:280px;top:955px;width:9px;height:10px;background:#3c7a3c"></div>
<div class="a" style="left:261px;top:972px;width:26px;height:1px;background:#aaa"></div>
<div class="a" style="left:271px;top:978.5px;width:6px;height:1px;background:#6aaa6a"></div>
<div class="a" style="left:301px;top:947px;width:18px;height:16px;background:#d9a766;border-radius:0.5px"></div>
<div class="a" style="left:299px;top:946px;width:22px;height:2px;background:#e6b87a"></div>
<div class="a" style="left:305px;top:939px;width:4px;height:8px;background:#b98a58;border-radius:1px"></div>
<div class="a" style="left:311px;top:939px;width:4px;height:8px;background:#b98a58;border-radius:1px"></div>
<div class="a" style="left:297px;top:954px;width:7px;height:11px;background:#5a3a8a"></div>
<div class="a" style="left:299px;top:972px;width:22px;height:1px;background:#aaa"></div>
<div class="a" style="left:307px;top:978.5px;width:6px;height:1px;background:#6aaa6a"></div>
<div class="a" style="left:338px;top:947px;width:22px;height:16px;background:#d9a766;border-radius:0.5px"></div>
<div class="a" style="left:336px;top:946px;width:26px;height:2px;background:#e6b87a"></div>
<div class="a" style="left:342px;top:939px;width:4px;height:8px;background:#b98a58;border-radius:1px"></div>
<div class="a" style="left:348px;top:939px;width:4px;height:8px;background:#b98a58;border-radius:1px"></div>
<div class="a" style="left:334px;top:954px;width:7px;height:11px;background:#5a3a8a"></div>
<div class="a" style="left:337px;top:940px;width:5px;height:7px;background:#4aa0d8"></div>
<div class="a" style="left:355px;top:955px;width:9px;height:10px;#7a4a2a"></div>
<div class="a" style="left:336px;top:972px;width:26px;height:1px;background:#aaa"></div>
<div class="a" style="left:346px;top:978.5px;width:6px;height:1px;background:#6aaa6a"></div>
<div class="a" style="left:258px;top:981.5px;width:33px;height:5px;background:#3c8c3c"></div>
<div class="a" style="left:261px;top:982px;width:24px;height:4px;background:#fff"></div>
<div class="a" style="left:295px;top:981.5px;width:32px;height:5px;background:#3c8c3c"></div>
<div class="a" style="left:331px;top:981.5px;width:33px;height:5px;background:#3c8c3c"></div>
<div class="a" style="left:284px;top:980px;width:8px;height:8px;border:1.2px solid #e0443a"></div>
<svg class="a" style="left:220px;top:904px;" width="181" height="113" viewBox="0 0 181 113"><path d="M71 78L171 13" stroke="#e5473a" stroke-width="1.4"/><path d="M174 11l-6 1.2 2.5 3.4z" fill="#e5473a"/></svg>
<div class="a" style="left:265px;top:1000px;width:18px;height:7px;background:linear-gradient(#3a3010,#b8a040)"></div>
<div class="a" style="left:221px;top:1007px;width:179px;height:10px;background:#3a5a8c"></div>
<div class="a" style="left:264px;top:1009px;width:50px;height:1px;background:#cdd6e6"></div>
<div class="a" style="left:264px;top:1012px;width:45px;height:1px;background:#cdd6e6"></div>
<div class="a" style="left:345px;top:1009.5px;width:14px;height:4.5px;border:0.8px solid #dde"></div>
<div class="a" style="left:63px;top:1125px;width:350px;height:201px;background:#fff;border:1.5px solid #c6c6c6"></div>
<div class="t" style="left:22px;top:1123.9px;font-size:26px;color:#555;font-weight:bold;">5</div>
<div class="t" style="left:78px;top:1136.6px;font-size:7.5px;color:#111;font-weight:bold;">Cart – Add to Cart</div>
<div class="t" style="left:78px;top:1161.9px;font-size:5.97px;color:#222;font-weight:normal;">A drop-down or drawer type layout are common</div>
<div class="t" style="left:78px;top:1170.6px;font-size:5.97px;color:#222;font-weight:normal;">treatments.</div>
<div class="t" style="left:78px;top:1185.9px;font-size:5.97px;color:#222;font-weight:normal;">Either cart should present the total cart value, total</div>
<div class="t" style="left:78px;top:1193.9px;font-size:5.97px;color:#222;font-weight:normal;">cart quantity, and a clear link to “View Cart” as well as</div>
<div class="t" style="left:78px;top:1201.9px;font-size:5.97px;color:#222;font-weight:normal;">several products (without scrolling if drop-down) or</div>
<div class="t" style="left:78px;top:1209.9px;font-size:5.97px;color:#222;font-weight:normal;">the just-added products.</div>
<div class="t" style="left:78px;top:1223.9px;font-size:5.97px;color:#222;font-weight:normal;">A strong visual indication such as an animation when</div>
<div class="t" style="left:78px;top:1231.9px;font-size:5.97px;color:#222;font-weight:normal;">the cart appears and disappears lets users know</div>
<div class="t" style="left:78px;top:1239.9px;font-size:5.97px;color:#222;font-weight:normal;">where it came from and where it can be found.</div>
<div class="t" style="left:78px;top:1256.2px;font-size:4.5px;color:#222;font-weight:normal;">Reference:</div>
<div class="a" style="left:78px;top:1264px;width:85px;height:2px;background:#2a5fc0"></div>
<div class="a" style="left:244px;top:1134px;width:157px;height:81px;background:#fff;border-right:1px solid #333"></div>
<div class="a" style="left:244px;top:1134px;width:157px;height:11px;background:#111"></div>
<div class="a" style="left:256px;top:1141px;width:4px;height:1px;background:#ccc"></div>
<div class="a" style="left:262px;top:1141px;width:4px;height:1px;background:#ccc"></div>
<div class="a" style="left:268px;top:1141px;width:4px;height:1px;background:#ccc"></div>
<div class="a" style="left:275px;top:1141px;width:4px;height:1px;background:#ccc"></div>
<div class="a" style="left:282px;top:1141px;width:4px;height:1px;background:#ccc"></div>
<div class="a" style="left:289px;top:1141px;width:4px;height:1px;background:#ccc"></div>
<div class="a" style="left:295px;top:1141px;width:4px;height:1px;background:#ccc"></div>
<div class="a" style="left:300px;top:1141px;width:4px;height:1px;background:#ccc"></div>
<div class="a" style="left:367px;top:1140px;width:22px;height:3px;background:#fff;border-radius:1px"></div>
<div class="a" style="left:391px;top:1140px;width:7px;height:2px;background:#aaa"></div>
<div class="a" style="left:251px;top:1147px;width:40px;height:1px;background:#b8c8e8"></div>
<div class="a" style="left:249px;top:1152px;width:80px;height:63px;background:#f0f0f0"></div>
<div class="a" style="left:259px;top:1152px;width:60px;height:63px;background:#e6e6e6"></div>
<svg class="a" style="left:269px;top:1153px;" width="40" height="62" viewBox="0 0 40 62"><ellipse cx="19" cy="6" rx="4.5" ry="5.5" fill="#2b1d16"/><path d="M7 62V23c0-8 5-11 12-11s12 3 12 11v39z" fill="#1a1a1a"/><path d="M12 20h14v27H12z" fill="#e9e9e9"/><path d="M19 14v34" stroke="#d4e14a" stroke-width="1"/><path d="M10 62l2-15h14l2 15z" fill="#d8d8d8"/><path d="M18 56l-3 6h6z" fill="#222"/></svg>
<div class="a" style="left:331px;top:1152px;width:36px;height:3px;background:#222"></div>
<div class="a" style="left:331px;top:1156px;width:36px;height:3px;background:#222"></div>
<div class="a" style="left:331px;top:1161px;width:5px;height:1px;background:#aaa"></div>
<div class="a" style="left:341px;top:1161px;width:16px;height:1px;background:#8aa6d8"></div>
<div class="a" style="left:331px;top:1169px;width:10px;height:10px;background:#f4f4f4;border:0.5px solid #ddd"></div>
<div class="a" style="left:334px;top:1170px;width:4px;height:8px;background:#bbb"></div>
<div class="a" style="left:331px;top:1184px;width:6px;height:1.5px;background:#d44"></div>
<div class="a" style="left:338px;top:1184px;width:6px;height:1.5px;background:#999"></div>
<div class="a" style="left:331px;top:1189px;width:28px;height:1px;background:#aaa"></div>
<div class="a" style="left:332px;top:1196px;width:3px;height:3px;background:#ccc"></div>
<div class="a" style="left:336px;top:1196px;width:4px;height:4px;background:#e0303a"></div>
<div class="a" style="left:342px;top:1196px;width:3px;height:3px;background:#ccc"></div>
<div class="a" style="left:347px;top:1196px;width:3px;height:3px;background:#ccc"></div>
<div class="a" style="left:331px;top:1202px;width:6px;height:3px;background:#3c5aa8"></div>
<div class="a" style="left:338px;top:1203px;width:24px;height:1px;background:#888"></div>
<div class="a" style="left:331px;top:1209px;width:42px;height:4px;background:#111"></div>
<div class="a" style="left:368px;top:1147px;width:32px;height:48px;background:#fff;border:0.6px solid #ccc"></div>
<div class="a" style="left:372px;top:1149px;width:20px;height:1.5px;background:#333"></div>
<div class="a" style="left:371px;top:1154px;width:5px;height:6px;background:#e6e6e6"></div>
<div class="a" style="left:378px;top:1154px;width:16px;height:1px;background:#555"></div>
<div class="a" style="left:378px;top:1157px;width:14px;height:1px;background:#555"></div>
<div class="a" style="left:379px;top:1163px;width:4px;height:1px;background:#777"></div>
<div class="a" style="left:379px;top:1167px;width:4px;height:1px;background:#777"></div>
<div class="a" style="left:378px;top:1171px;width:8px;height:1px;background:#d44"></div>
<div class="a" style="left:370px;top:1176px;width:5px;height:3px;background:#3c5aa8"></div>
<div class="a" style="left:376px;top:1176px;width:20px;height:1px;background:#555"></div>
<div class="a" style="left:371px;top:1185px;width:28px;height:1px;background:#999"></div>
<div class="a" style="left:371px;top:1189px;width:28px;height:4px;background:#fff;border:0.6px solid #888"></div>
<div class="a" style="left:244px;top:1221px;width:158px;height:93px;background:#fff;border-left:1px solid #111;border-right:1px solid #111"></div>
<div class="a" style="left:244px;top:1221px;width:158px;height:7.5px;background:#131921"></div>
<div class="a" style="left:248px;top:1223px;width:10px;height:2px;background:#ddd"></div>
<div class="a" style="left:279px;top:1223.5px;width:64px;height:3px;background:#fff;border-radius:1px"></div>
<div class="a" style="left:341px;top:1223.5px;width:4px;height:3px;background:#f3a847"></div>
<div class="a" style="left:360px;top:1223px;width:30px;height:2px;background:#bbb"></div>
<div class="a" style="left:244px;top:1228.5px;width:145px;height:4.5px;background:#232f3e"></div>
<div class="a" style="left:248px;top:1230px;width:6px;height:1px;background:#bbb"></div>
<div class="a" style="left:258px;top:1230px;width:6px;height:1px;background:#bbb"></div>
<div class="a" style="left:268px;top:1230px;width:6px;height:1px;background:#bbb"></div>
<div class="a" style="left:278px;top:1230px;width:6px;height:1px;background:#bbb"></div>
<div class="a" style="left:288px;top:1230px;width:6px;height:1px;background:#bbb"></div>
<div class="a" style="left:298px;top:1230px;width:6px;height:1px;background:#bbb"></div>
<div class="a" style="left:308px;top:1230px;width:6px;height:1px;background:#bbb"></div>
<div class="a" style="left:318px;top:1230px;width:6px;height:1px;background:#bbb"></div>
<div class="a" style="left:328px;top:1230px;width:6px;height:1px;background:#bbb"></div>
<div class="a" style="left:338px;top:1230px;width:6px;height:1px;background:#bbb"></div>
<div class="a" style="left:348px;top:1230px;width:6px;height:1px;background:#bbb"></div>
<div class="a" style="left:358px;top:1230px;width:6px;height:1px;background:#bbb"></div>
<div class="a" style="left:368px;top:1230px;width:6px;height:1px;background:#bbb"></div>
<div class="a" style="left:378px;top:1230px;width:6px;height:1px;background:#bbb"></div>
<div class="a" style="left:389px;top:1221px;width:12px;height:93px;background:#fff"></div>
<div class="a" style="left:248px;top:1235px;width:8px;height:0.8px;background:#888"></div>
<div class="a" style="left:262px;top:1235px;width:8px;height:0.8px;background:#888"></div>
<div class="a" style="left:276px;top:1235px;width:8px;height:0.8px;background:#888"></div>
<div class="a" style="left:290px;top:1235px;width:8px;height:0.8px;background:#888"></div>
<div class="a" style="left:304px;top:1235px;width:8px;height:0.8px;background:#888"></div>
<div class="a" style="left:318px;top:1235px;width:8px;height:0.8px;background:#888"></div>
<div class="a" style="left:332px;top:1235px;width:8px;height:0.8px;background:#888"></div>
<div class="a" style="left:346px;top:1235px;width:8px;height:0.8px;background:#888"></div>
<div class="a" style="left:360px;top:1235px;width:8px;height:0.8px;background:#888"></div>
<div class="a" style="left:374px;top:1235px;width:8px;height:0.8px;background:#888"></div>
<div class="a" style="left:282px;top:1238px;width:71px;height:5px;background:linear-gradient(90deg,#7fd0c0,#eee 30%,#ddd 70%,#c8a040)"></div>
<div class="a" style="left:248px;top:1245px;width:80px;height:0.6px;background:#aaa"></div>
<svg class="a" style="left:246px;top:1248px;" width="72" height="56" viewBox="0 0 72 56"><path d="M2 26l12-18 2 2-12 18z" fill="#9aa"/><path d="M8 40l14-26 12 6-12 28z" fill="#8c969c"/><path d="M20 44l14-26 12 6-12 28z" fill="#a6a6a0"/><path d="M32 48l14-26c8 0 14 4 14 10l-14 24z" fill="#e3b23c"/><path d="M44 52l14-26 12 6-12 28z" fill="#8a949a"/><path d="M4 40l52 16-2 3L2 43z" fill="#707a80"/></svg>
<div class="a" style="left:280px;top:1303px;width:4px;height:3px;background:#e9c77a"></div>
<div class="a" style="left:285px;top:1303px;width:4px;height:3px;background:#d8a040"></div>
<div class="a" style="left:290px;top:1303px;width:4px;height:3px;background:#c33"></div>
<div class="a" style="left:295px;top:1303px;width:4px;height:3px;background:#eee"></div>
<div class="a" style="left:300px;top:1303px;width:4px;height:3px;background:#caa"></div>
<div class="a" style="left:320px;top:1248px;width:36px;height:2px;background:#333"></div>
<div class="a" style="left:320px;top:1251.5px;width:34px;height:2px;background:#333"></div>
<div class="a" style="left:320px;top:1255px;width:24px;height:2px;background:#333"></div>
<div class="a" style="left:320px;top:1258.5px;width:18px;height:1px;background:#5b8fd8"></div>
<div class="a" style="left:320px;top:1261px;width:12px;height:1px;background:#f0a020"></div>
<div class="a" style="left:330px;top:1261px;width:10px;height:1px;background:#5b8fd8"></div>
<div class="a" style="left:320px;top:1263.5px;width:12px;height:1.5px;background:#232f3e"></div>
<div class="a" style="left:320px;top:1267px;width:38px;height:0.8px;background:#999"></div>
<div class="a" style="left:320px;top:1270px;width:38px;height:0.8px;background:#999"></div>
<div class="a" style="left:320px;top:1273px;width:38px;height:0.8px;background:#999"></div>
<div class="a" style="left:320px;top:1276px;width:38px;height:0.8px;background:#999"></div>
<div class="a" style="left:320px;top:1279px;width:38px;height:0.8px;background:#999"></div>
<div class="a" style="left:320px;top:1282px;width:38px;height:0.8px;background:#999"></div>
<div class="a" style="left:320px;top:1285px;width:38px;height:0.8px;background:#999"></div>
<div class="a" style="left:320px;top:1288px;width:38px;height:0.8px;background:#999"></div>
<div class="a" style="left:320px;top:1291px;width:38px;height:0.8px;background:#999"></div>
<div class="a" style="left:320px;top:1294px;width:38px;height:0.8px;background:#999"></div>
<div class="a" style="left:320px;top:1297px;width:38px;height:0.8px;background:#999"></div>
<div class="a" style="left:320px;top:1300px;width:38px;height:0.8px;background:#999"></div>
<div class="a" style="left:320px;top:1303px;width:38px;height:0.8px;background:#999"></div>
<div class="a" style="left:320px;top:1306px;width:38px;height:0.8px;background:#999"></div>
<div class="a" style="left:320px;top:1309px;width:38px;height:0.8px;background:#999"></div>
<div class="a" style="left:320px;top:1312px;width:38px;height:0.8px;background:#999"></div>
<div class="a" style="left:320px;top:1277px;width:38px;height:0.8px;background:#5b8fd8"></div>
<div class="a" style="left:363px;top:1249px;width:25px;height:65px;background:#fff;border-left:0.5px solid #eee"></div>
<div class="a" style="left:364px;top:1250px;width:6px;height:1px;background:#c33"></div>
<div class="a" style="left:364px;top:1253px;width:22px;height:0.8px;background:#aaa"></div>
<div class="a" style="left:364px;top:1256px;width:22px;height:0.8px;background:#aaa"></div>
<div class="a" style="left:364px;top:1259px;width:22px;height:0.8px;background:#aaa"></div>
<div class="a" style="left:364px;top:1262px;width:22px;height:0.8px;background:#aaa"></div>
<div class="a" style="left:364px;top:1266px;width:22px;height:0.8px;background:#aaa"></div>
<div class="a" style="left:364px;top:1269px;width:22px;height:0.8px;background:#aaa"></div>
<div class="a" style="left:364px;top:1273px;width:22px;height:0.8px;background:#aaa"></div>
<div class="a" style="left:364px;top:1277px;width:22px;height:0.8px;background:#aaa"></div>
<div class="a" style="left:364px;top:1281px;width:22px;height:0.8px;background:#aaa"></div>
<div class="a" style="left:364px;top:1263px;width:12px;height:0.8px;background:#5b8fd8"></div>
<div class="a" style="left:364px;top:1270px;width:14px;height:0.8px;background:#3a9a3a"></div>
<div class="a" style="left:364px;top:1288px;width:23px;height:3px;background:#f3d078;border-radius:1px"></div>
<div class="a" style="left:364px;top:1292.5px;width:23px;height:3px;background:#f0b050;border-radius:1px"></div>
<div class="a" style="left:364px;top:1298px;width:14px;height:0.8px;background:#5b8fd8"></div>
<div class="a" style="left:390px;top:1232px;width:9px;height:6px;background:#333;border-radius:1px;opacity:.85"></div>
<div class="a" style="left:390px;top:1245px;width:9px;height:6px;background:#999;border-radius:1px;opacity:.85"></div>
<div class="a" style="left:390px;top:1258px;width:9px;height:6px;background:#8a8e92;border-radius:1px;opacity:.85"></div>
<div class="a" style="left:390px;top:1268px;width:9px;height:6px;background:#556;border-radius:1px;opacity:.85"></div>
<div class="a" style="left:390px;top:1278px;width:9px;height:6px;background:#c9a050;border-radius:1px;opacity:.85"></div>
<div class="a" style="left:60px;top:1349px;width:358px;height:210px;background:#c84f2f"></div>
<div class="a" style="left:66px;top:1355px;width:346px;height:198px;background:#fff"></div>
<div class="t" style="left:22px;top:1353.9px;font-size:26px;color:#555;font-weight:bold;">6</div>
<div class="a th6" style="left:66px;top:1355px;width:346px;height:198px;overflow:hidden">
<div class="a" style="left:0;top:0;width:3360px;height:2056px;transform-origin:0 0;transform:scale(0.1272) translate(-571px,-328px)">
<div class="t" style="left:655px;top:411.5px;font-size:60px;color:#000;font-weight:bold;transform:scaleX(0.955);transform-origin:0 0">Cart</div>
<div class="t" style="left:667px;top:573.3px;font-size:46.7px;color:#000;font-weight:normal;transform:scaleX(1.003);transform-origin:0 0">It's best to add estimated shipping &amp; taxes to</div>
<div class="t" style="left:667px;top:632.3px;font-size:46.7px;color:#000;font-weight:normal;transform:scaleX(1.006);transform-origin:0 0">order summary if exact figures cannot be provided.</div>
<div class="t" style="left:667px;top:756.3px;font-size:46.7px;color:#000;font-weight:normal;transform:scaleX(0.998);transform-origin:0 0">Many users are likely to have a strong mental model of</div>
<div class="t" style="left:667px;top:816.3px;font-size:46.7px;color:#000;font-weight:normal;transform:scaleX(1.008);transform-origin:0 0">“quantity 0 = delete”. users should be allowed to</div>
<div class="t" style="left:667px;top:876.3px;font-size:46.7px;color:#000;font-weight:normal;transform:scaleX(1.019);transform-origin:0 0">delete items by setting the quantity to 0.</div>
<div class="t" style="left:667px;top:1000.3px;font-size:46.7px;color:#000;font-weight:normal;transform:scaleX(1.003);transform-origin:0 0">Allow for any edits or updates at this state and</div>
<div class="t" style="left:667px;top:1060.3px;font-size:46.7px;color:#000;font-weight:normal;transform:scaleX(1.005);transform-origin:0 0">automatically apply those edits. The cart summary</div>
<div class="t" style="left:667px;top:1120.3px;font-size:46.7px;color:#000;font-weight:normal;transform:scaleX(1.023);transform-origin:0 0">and order total must update immediately</div>
<div class="t" style="left:667px;top:1243.3px;font-size:46.7px;color:#000;font-weight:normal;transform:scaleX(0.978);transform-origin:0 0">Display identical items as duplicates so users could see</div>
<div class="t" style="left:667px;top:1304.3px;font-size:46.7px;color:#000;font-weight:normal;transform:scaleX(0.996);transform-origin:0 0">if they made a mistake during the review process.</div>
<div class="t" style="left:667px;top:1426.1px;font-size:30.5px;color:#000;font-weight:normal;transform:scaleX(0.975);transform-origin:0 0">Reference:</div>
<div class="t" style="left:667px;top:1466.2px;font-size:32.7px;color:#2862c0;font-weight:normal;text-decoration:underline;text-decoration-thickness:2px;text-underline-offset:4px">https://baymard.com/premium/guidelines/732</div>
<div class="t" style="left:667px;top:1506.2px;font-size:32.7px;color:#2862c0;font-weight:normal;text-decoration:underline;text-decoration-thickness:2px;text-underline-offset:4px">https://baymard.com/premium/guidelines/623</div>
<div class="t" style="left:667px;top:1546.2px;font-size:32.7px;color:#2862c0;font-weight:normal;text-decoration:underline;text-decoration-thickness:2px;text-underline-offset:4px">https://baymard.com/premium/guidelines/624</div>
<div class="a" style="left:1950px;top:408px;width:1280px;height:1366px;background:#e4e4e4"></div>
<div class="a" style="left:1965px;top:424px;width:1254px;height:1335px;background:#fff"></div>
<div class="a" style="left:1965px;top:424px;width:1254px;height:60px;background:#000"></div>
<div class="a" style="left:1965px;top:484px;width:1254px;height:6px;background:linear-gradient(rgba(0,0,0,.12),rgba(0,0,0,0))"></div>
<svg class="a" style="left:1995px;top:443.5px;" width="22" height="23" viewBox="0 0 22 23"><path d="M11.5 0C4.5 0 0 4.5 0 11.5S4.5 23 11 23c3 0 5.5-1 7-2.5V23h3.5V10H11v5h5c-.5 2-2.5 3-5 3-3.5 0-5.5-2.5-5.5-6.5S7.5 5 11.5 5c2 0 3.5.8 4.5 2l4.5-3C18.5 1.5 15.5 0 11.5 0z" fill="#fafafa"/><path d="M9 16l9-8-4 7z" fill="#e8702a"/></svg>
<div class="a" style="left:2021px;top:440.5px;width:2px;height:29px;background:#d98f45"></div>
<div class="t" style="left:2029px;top:438.7px;font-size:30px;font-weight:bold;font-style:italic;color:#f8f8f8;transform:scaleX(0.71);transform-origin:0 0">TEAM Z<span style="color:#eba35c">O</span>NE</div>
<div class="t" style="left:2195px;top:446.9px;font-size:16px;color:#e6e6e6;font-weight:bold;transform:scaleX(0.7);transform-origin:0 0;text-decoration:underline;text-underline-offset:2px">SHOP</div>
<div class="t" style="left:2267px;top:446.9px;font-size:16px;color:#e6e6e6;font-weight:bold;transform:scaleX(0.66);transform-origin:0 0;">ORDERS</div>
<div class="t" style="left:2353px;top:446.9px;font-size:16px;color:#e6e6e6;font-weight:bold;transform:scaleX(0.675);transform-origin:0 0;">ACCOUNT</div>
<svg class="a" style="left:3135px;top:441px;" width="24" height="27" viewBox="0 0 24 27"><path d="M7 9a5 5 0 0 1 10 0" fill="none" stroke="#eee" stroke-width="2"/><path d="M2 10h20l-3 15H5z" fill="none" stroke="#eee" stroke-width="2.2"/></svg>
<div class="t" style="left:3165px;top:448.1px;font-size:14px;color:#cfcfcf;font-weight:normal;">(46)</div>
<div class="t" style="left:2037px;top:528.6px;font-size:27.5px;color:#111;font-weight:bold;transform:scaleX(0.715);transform-origin:0 0;">YOUR CART (0 ITEMS)</div>
<div class="a" style="left:2039px;top:579px;width:712px;height:2px;background:#d0d0d0"></div>
<div class="a" style="left:2039px;top:821px;width:712px;height:2px;background:#d0d0d0"></div>
<div class="a" style="left:2039px;top:1050px;width:712px;height:2px;background:#d0d0d0"></div>
<div class="a" style="left:2039px;top:1293px;width:712px;height:2px;background:#d0d0d0"></div>
<div class="t" style="left:2260px;top:605.2px;font-size:17.4px;color:#151515;font-weight:bold;transform:scaleX(0.71);transform-origin:0 0;">BOLT 24</div>
<div class="t" style="left:1749px;width:1000px;text-align:right;top:602.4px;font-size:16px;color:#ea6a33;font-weight:normal;">$18.00</div>
<div class="a" style="left:2259px;top:640px;width:67px;height:30px;border:1.5px solid #d9d9d9;border-radius:2px;background:#fff"></div>
<div class="t" style="left:2275px;top:647.2px;font-size:14.5px;color:#222;font-weight:normal;">9</div>
<svg class="a" style="left:2299px;top:651px;" width="18" height="9" viewBox="0 0 18 9"><path d="M1 1l8 7 8-7" fill="none" stroke="#333" stroke-width="1.8"/></svg>
<div class="t" style="left:2347px;top:648.9px;font-size:11.6px;color:#555;font-weight:bold;transform:scaleX(0.775);transform-origin:0 0;text-decoration:underline;text-underline-offset:2px">REMOVE</div>
<svg class="a" style="left:2104px;top:620px;" width="70" height="170" viewBox="0 0 70 170"><defs><linearGradient id="bk" x1="0" x2="1"><stop offset="0" stop-color="#050505"/><stop offset=".35" stop-color="#2a2a2a"/><stop offset=".6" stop-color="#111"/><stop offset="1" stop-color="#030303"/></linearGradient><linearGradient id="pk" x1="0" x2="1"><stop offset="0" stop-color="#c56a6e"/><stop offset=".45" stop-color="#e39a9c"/><stop offset="1" stop-color="#c46367"/></linearGradient></defs><rect x="19" y="2" width="32" height="14" rx="2.5" fill="#151515"/><rect x="21" y="15" width="28" height="5" fill="#e9e9e9"/><path d="M20 20h30c7 4 11 10 12 19H8c1-9 5-15 12-19z" fill="url(#pk)"/><rect x="8" y="39" width="54" height="8" fill="#6d6d6d"/><path d="M8 47h54v34l-2 4 2 4v28l-2 4 2 4v30c0 4-6 6-27 6s-27-2-27-6v-30l2-4-2-4v-28l2-4-2-4z" fill="url(#bk)"/><path d="M47 57L25 72l8 1-10 13L46 69l-8-1z" fill="#f6f6f6"/><text x="35" y="95" font-family="Liberation Sans" font-weight="bold" font-size="7.5" fill="#ddd" text-anchor="middle" letter-spacing="1">BOLT24</text><rect x="20" y="101" width="30" height="1.5" fill="#777"/><rect x="22" y="105" width="26" height="1.2" fill="#666"/><rect x="22" y="130" width="26" height="2" fill="#c46a78"/><rect x="27" y="134" width="16" height="2" fill="#c46a78"/><rect x="21" y="138" width="28" height="1.5" fill="#555"/></svg>
<div class="t" style="left:2260px;top:846.9px;font-size:16.9px;color:#151515;font-weight:bold;transform:scaleX(0.742);transform-origin:0 0;">GTQ 28OZ RTD WIDE MOUTH</div>
<div class="t" style="left:1749px;width:1000px;text-align:right;top:844.4px;font-size:16px;color:#ea6a33;font-weight:normal;">$19.00</div>
<div class="a" style="left:2259px;top:882px;width:67px;height:29px;border:1.5px solid #d9d9d9;border-radius:2px;background:#fff"></div>
<div class="t" style="left:2275px;top:889.2px;font-size:14.5px;color:#222;font-weight:normal;">12</div>
<svg class="a" style="left:2299px;top:893px;" width="18" height="9" viewBox="0 0 18 9"><path d="M1 1l8 7 8-7" fill="none" stroke="#333" stroke-width="1.8"/></svg>
<div class="t" style="left:2347px;top:891.1px;font-size:11.6px;color:#555;font-weight:bold;transform:scaleX(0.775);transform-origin:0 0;text-decoration:underline;text-underline-offset:2px">REMOVE</div>
<svg class="a" style="left:2104px;top:864px;" width="70" height="170" viewBox="0 0 70 170"><defs><linearGradient id="pl" x1="0" x2="1"><stop offset="0" stop-color="#d94f8c"/><stop offset=".4" stop-color="#f38ab8"/><stop offset=".7" stop-color="#ea6ea6"/><stop offset="1" stop-color="#cf4682"/></linearGradient><linearGradient id="gl" x1="0" x2="1"><stop offset="0" stop-color="#555"/><stop offset=".5" stop-color="#7a7a7a"/><stop offset="1" stop-color="#4e4e4e"/></linearGradient></defs><rect x="19" y="3" width="30" height="12" rx="2.5" fill="#ee7a2c"/><rect x="19" y="12" width="30" height="3" fill="#d8621e"/><path d="M22 15h25v8c12 4 18 10 18 18v20H3v-20c0-8 6-14 19-18z" fill="url(#pl)"/><path d="M3 61h62v83H3z" fill="url(#gl)"/><path d="M11 144L56 61h9v14L26 144z" fill="#e5609c" opacity=".85"/><path d="M3 96l25-35h10L3 111z" fill="#e5609c" opacity=".7"/><path d="M26 77h19l-2 8h-11c-2 0-3 1-3 3v9c0 2 1 3 3 3h4l1-4h-3l1-5h9l-3 15h-16c-4 0-6-2-5-6l2-17c1-4 2-6 4-6z" fill="#fff"/><path d="M30 99l9-13-3 10z" fill="#e8702a"/><rect x="6 " y="117" width="30" height="4" fill="#eee"/><rect x="38" y="117" width="20" height="4" fill="#d03a3a"/><rect x="6" y="125" width="25" height="2" fill="#e5609c"/><path d="M3 144h62v14c0 4-4 6-31 6s-31-2-31-6z" fill="url(#pl)"/></svg>
<div class="t" style="left:2260px;top:1073.1px;font-size:16.9px;color:#151515;font-weight:bold;transform:scaleX(0.742);transform-origin:0 0;">GTQ 20OZ RTD WIDE MOUTH</div>
<div class="t" style="left:1751px;width:1000px;text-align:right;top:1074.4px;font-size:16px;color:#ea6a33;font-weight:normal;">$19.00</div>
<div class="a" style="left:2259px;top:1109px;width:67px;height:29px;border:1.5px solid #d9d9d9;border-radius:2px;background:#fff"></div>
<div class="t" style="left:2275px;top:1116.2px;font-size:14.5px;color:#222;font-weight:normal;">25</div>
<svg class="a" style="left:2299px;top:1120px;" width="18" height="9" viewBox="0 0 18 9"><path d="M1 1l8 7 8-7" fill="none" stroke="#333" stroke-width="1.8"/></svg>
<div class="t" style="left:2347px;top:1117.9px;font-size:12.5px;color:#666;font-weight:normal;text-decoration:underline;text-underline-offset:2px">Remove</div>
<svg class="a" style="left:2104px;top:1090px;" width="70" height="170" viewBox="0 0 70 170"><defs><linearGradient id="bl" x1="0" x2="1"><stop offset="0" stop-color="#2b8fc8"/><stop offset=".45" stop-color="#5cc8ec"/><stop offset=".75" stop-color="#43b2e0"/><stop offset="1" stop-color="#2588c2"/></linearGradient></defs><rect x="19" y="2" width="32" height="14" rx="2.5" fill="#f0962c"/><rect x="19" y="12" width="32" height="4" fill="#de7a1c"/><path d="M22 16h26v10c11 3 17 10 17 20v20H7v-20c0-10 5-17 15-20z" fill="url(#bl)"/><rect x="6" y="66" width="60" height="12" rx="3" fill="#2f98cf"/><rect x="7" y="78" width="58" height="65" fill="#e8ecef"/><path d="M7 78h22c-6 8-10 18-12 30l-10 35z" fill="#2c8ccc"/><path d="M29 84h18v7h-10c-2 0-3 1-3 3v14c0 2 1 3 3 3h5l1-5h-4l1-5h10l-3 17h-17c-4 0-5-2-5-5l3-24c1-4 2-5 4-5z" fill="#fff" stroke="#c9d2d8" stroke-width=".8"/><path d="M33 110l11-15-4 12z" fill="#f0a020"/><rect x="60" y="82" width="4" height="55" fill="#b8c0c6"/><rect x="24" y="128" width="26" height="7" fill="#2d8fd0"/><path d="M7 143h58v14c0 5-4 7-29 7s-29-2-29-7z" fill="url(#bl)"/></svg>
<div class="a" style="left:2040px;top:1315px;width:711px;height:39px;background:#e85d29"></div>
<div class="t" style="left:1895.5px;width:1000px;text-align:center;top:1327.2px;font-size:15px;color:#fff;font-weight:bold;transform:scaleX(0.74);transform-origin:50% 0;">PROCEED TO CHECKOUT</div>
<div class="a" style="left:2769px;top:580px;width:376px;height:322px;border:2px solid #e6e6e6;background:#fff"></div>
<div class="t" style="left:2790px;top:602.8px;font-size:15.5px;color:#222;font-weight:bold;transform:scaleX(0.71);transform-origin:0 0;">ORDER SUMMARY</div>
<div class="a" style="left:2790px;top:640px;width:335px;height:2px;background:#d6d6d6"></div>
<div class="t" style="left:2790px;top:663.8px;font-size:15.5px;color:#444;font-weight:normal;">Subtotal</div>
<div class="t" style="left:2125px;width:1000px;text-align:right;top:663.8px;font-size:15.5px;color:#444;font-weight:normal;">$927.00</div>
<div class="t" style="left:2790px;top:703.8px;font-size:15.5px;color:#444;font-weight:normal;">Shipping &amp; Handling</div>
<div class="t" style="left:2125px;width:1000px;text-align:right;top:703.8px;font-size:15.5px;color:#ea6a33;font-weight:normal;">Free</div>
<div class="t" style="left:2790px;top:743.8px;font-size:15.5px;color:#444;font-weight:normal;">Taxes &amp; fees</div>
<div class="t" style="left:2125px;width:1000px;text-align:right;top:743.8px;font-size:15.5px;color:#444;font-weight:normal;">- -</div>
<div class="a" style="left:2790px;top:781px;width:335px;height:2px;background:#cfcfcf"></div>
<div class="t" style="left:2790px;top:805.8px;font-size:15.5px;color:#333;font-weight:bold;">Grand Total</div>
<div class="t" style="left:2125px;width:1000px;text-align:right;top:805.8px;font-size:15.5px;color:#333;font-weight:bold;">$927.00</div>
<div class="a" style="left:2789px;top:843px;width:337px;height:40px;background:#e85d29"></div>
<div class="t" style="left:2457.5px;width:1000px;text-align:center;top:855.2px;font-size:15px;color:#fff;font-weight:bold;transform:scaleX(0.74);transform-origin:50% 0;">PROCEED TO CHECKOUT</div>
<div class="a" style="left:1965px;top:1475px;width:1254px;height:284px;background:#000"></div>
<svg class="a" style="left:2046px;top:1538px;" width="22" height="23" viewBox="0 0 22 23"><path d="M11.5 0C4.5 0 0 4.5 0 11.5S4.5 23 11 23c3 0 5.5-1 7-2.5V23h3.5V10H11v5h5c-.5 2-2.5 3-5 3-3.5 0-5.5-2.5-5.5-6.5S7.5 5 11.5 5c2 0 3.5.8 4.5 2l4.5-3C18.5 1.5 15.5 0 11.5 0z" fill="#fafafa"/><path d="M9 16l9-8-4 7z" fill="#e8702a"/></svg>
<div class="a" style="left:2072px;top:1535px;width:2px;height:29px;background:#d98f45"></div>
<div class="t" style="left:2080px;top:1533.2px;font-size:30px;font-weight:bold;font-style:italic;color:#f8f8f8;transform:scaleX(0.71);transform-origin:0 0">TEAM Z<span style="color:#eba35c">O</span>NE</div>
<div class="t" style="left:2045px;top:1583.8px;font-size:12px;color:#c8c8c8;font-weight:normal;">1-800-433-2652 · 700 Anderson Hill Rd</div>
<div class="t" style="left:2045px;top:1603.8px;font-size:12px;color:#c8c8c8;font-weight:normal;">Purchase, NY 10577</div>
<div class="t" style="left:2091px;width:1000px;text-align:center;top:1701.0px;font-size:11.8px;color:#bdbdbd;font-weight:normal;">© 2020 Team Zone by Gatorade. All Rights Reserved.</div>
<div class="t" style="left:3001px;top:1521.1px;font-size:15.2px;color:#d2d2d2;font-weight:normal;">Refunds &amp; Returns</div>
<div class="t" style="left:3001px;top:1562.1px;font-size:15.2px;color:#d2d2d2;font-weight:normal;">Terms Of Service</div>
<div class="t" style="left:3001px;top:1603.1px;font-size:15.2px;color:#d2d2d2;font-weight:normal;">Privacy Policy</div>
<div class="t" style="left:3001px;top:1644.1px;font-size:15.2px;color:#d2d2d2;font-weight:normal;">Contact Us</div>
<div class="a" style="left:1961px;top:423px;width:2.5px;height:1337px;background:#4a8ae6"></div>
<div class="a" style="left:3218px;top:423px;width:2.5px;height:1337px;background:#4a8ae6"></div>
<div class="a" style="left:1961px;top:423px;width:1260px;height:2.5px;background:#4a8ae6"></div>
<div class="a" style="left:1961px;top:1757.5px;width:1260px;height:2.5px;background:#4a8ae6"></div>
<div class="a" style="left:1966px;top:1227px;width:1253px;height:2px;background:repeating-linear-gradient(90deg,#4785e2 0 6px,transparent 6px 13.3px)"></div>
<div class="a" style="left:1950px;top:1215px;width:16px;height:26px;background:#3d85e8"></div>
<div class="a" style="left:1950px;top:1223px;width:4px;height:2px;background:#fff"></div>
<div class="a" style="left:1950px;top:1229px;width:4px;height:2px;background:#fff"></div>
<div class="a" style="left:1954px;top:416px;width:17px;height:17px;border-radius:50%;background:#fff;border:2.5px solid #4a8ae6"></div>
<div class="a" style="left:2582px;top:416px;width:17px;height:17px;border-radius:50%;background:#fff;border:2.5px solid #4a8ae6"></div>
<div class="a" style="left:3211px;top:416px;width:17px;height:17px;border-radius:50%;background:#fff;border:2.5px solid #4a8ae6"></div>
<div class="a" style="left:1954px;top:1083px;width:17px;height:17px;border-radius:50%;background:#fff;border:2.5px solid #4a8ae6"></div>
<div class="a" style="left:3211px;top:1083px;width:17px;height:17px;border-radius:50%;background:#fff;border:2.5px solid #4a8ae6"></div>
<div class="a" style="left:1954px;top:1751px;width:17px;height:17px;border-radius:50%;background:#fff;border:2.5px solid #4a8ae6"></div>
<div class="a" style="left:2582px;top:1751px;width:17px;height:17px;border-radius:50%;background:#fff;border:2.5px solid #4a8ae6"></div>
<div class="a" style="left:3211px;top:1751px;width:17px;height:17px;border-radius:50%;background:#fff;border:2.5px solid #4a8ae6"></div>
</div></div>
<div class="a" style="left:63px;top:1584px;width:350px;height:202px;background:#fff;border:1.5px solid #c6c6c6"></div>
<div class="t" style="left:22px;top:1582.9px;font-size:26px;color:#555;font-weight:bold;">7</div>
<div class="t" style="left:78px;top:1596.1px;font-size:7.6px;color:#111;font-weight:bold;">Checkout</div>
<div class="t" style="left:78px;top:1613.8px;font-size:5.82px;color:#222;font-weight:normal;">Improved checkout flows can reduce 20-60% of user load</div>
<div class="t" style="left:78px;top:1621.6px;font-size:5.82px;color:#222;font-weight:normal;">and lead to more completed sessions.</div>
<div class="t" style="left:78px;top:1636.6px;font-size:5.82px;color:#222;font-weight:normal;">Big debate multi-step vs single page.</div>
<div class="t" style="left:78px;top:1652.1px;font-size:5.82px;color:#222;font-weight:normal;">Single page checkouts consistently perform better if they</div>
<div class="t" style="left:78px;top:1660.1px;font-size:5.82px;color:#222;font-weight:normal;">are simple and require minimal steps.</div>
<div class="t" style="left:78px;top:1675.1px;font-size:5.82px;color:#222;font-weight:normal;">If not, multistep is the recommendation. Order Summary</div>
<div class="t" style="left:78px;top:1683.1px;font-size:5.82px;color:#222;font-weight:normal;">should be shown at each step.</div>
<div class="t" style="left:78px;top:1699.1px;font-size:5.82px;color:#222;font-weight:normal;">Users should be able to review fully before ordering and</div>
<div class="t" style="left:78px;top:1706.6px;font-size:5.82px;color:#222;font-weight:normal;">edit any chunk of information on that page in any section</div>
<div class="t" style="left:78px;top:1714.1px;font-size:5.82px;color:#222;font-weight:normal;">automatically updating for the user.</div>
<div class="t" style="left:78px;top:1730.4px;font-size:3.6px;color:#222;font-weight:normal;font-style:italic">Important to note our orders include variables that trigger a review response</div>
<div class="t" style="left:78px;top:1742.4px;font-size:4.2px;color:#222;font-weight:normal;">Reference:</div>
<div class="a" style="left:78px;top:1750px;width:84px;height:2px;background:#2a5fc0"></div>
<div class="a" style="left:78px;top:1755px;width:84px;height:2px;background:#2a5fc0"></div>
<div class="a" style="left:78px;top:1760px;width:84px;height:2px;background:#2a5fc0"></div>
<div class="a" style="left:78px;top:1765px;width:84px;height:2px;background:#2a5fc0"></div>
<div class="a" style="left:248px;top:1593px;width:76px;height:176px;background:#fff;border:1px solid #b7c9ea"></div>
<div class="a" style="left:249px;top:1593px;width:74px;height:4px;background:#000"></div>
<div class="a" style="left:253px;top:1603px;width:10px;height:1px;background:#bbb"></div>
<div class="a" style="left:256.5px;top:1606px;width:4.5px;height:10.5px;background:#111;border-radius:1.5px"></div>
<div class="a" style="left:265px;top:1607px;width:8px;height:1px;background:#555"></div>
<div class="a" style="left:266px;top:1610px;width:6px;height:1.5px;background:#ccc"></div>
<div class="a" style="left:286px;top:1607px;width:4px;height:1px;background:#e87040"></div>
<div class="a" style="left:256.5px;top:1621.5px;width:4.5px;height:10.5px;background:#e0609a;border-radius:1.5px"></div>
<div class="a" style="left:265px;top:1622.5px;width:8px;height:1px;background:#555"></div>
<div class="a" style="left:266px;top:1625.5px;width:6px;height:1.5px;background:#ccc"></div>
<div class="a" style="left:286px;top:1622.5px;width:4px;height:1px;background:#e87040"></div>
<div class="a" style="left:256.5px;top:1635.5px;width:4.5px;height:10.5px;background:#3aa8e0;border-radius:1.5px"></div>
<div class="a" style="left:265px;top:1636.5px;width:8px;height:1px;background:#555"></div>
<div class="a" style="left:266px;top:1639.5px;width:6px;height:1.5px;background:#ccc"></div>
<div class="a" style="left:286px;top:1636.5px;width:4px;height:1px;background:#e87040"></div>
<div class="a" style="left:253px;top:1618px;width:42px;height:0.8px;background:#eee"></div>
<div class="a" style="left:253px;top:1632.5px;width:42px;height:0.8px;background:#eee"></div>
<div class="a" style="left:296.5px;top:1604.5px;width:23px;height:21px;background:#fff;border:0.8px solid #e4e4e4"></div>
<div class="a" style="left:298px;top:1607px;width:7px;height:0.8px;background:#999"></div>
<div class="a" style="left:313px;top:1607px;width:5px;height:0.8px;background:#999"></div>
<div class="a" style="left:298px;top:1610px;width:7px;height:0.8px;background:#999"></div>
<div class="a" style="left:313px;top:1610px;width:5px;height:0.8px;background:#999"></div>
<div class="a" style="left:298px;top:1612.5px;width:7px;height:0.8px;background:#999"></div>
<div class="a" style="left:313px;top:1612.5px;width:5px;height:0.8px;background:#999"></div>
<div class="a" style="left:298px;top:1615px;width:7px;height:0.8px;background:#999"></div>
<div class="a" style="left:313px;top:1615px;width:5px;height:0.8px;background:#999"></div>
<div class="a" style="left:298px;top:1618px;width:7px;height:0.8px;background:#999"></div>
<div class="a" style="left:313px;top:1618px;width:5px;height:0.8px;background:#999"></div>
<div class="a" style="left:298px;top:1621px;width:7px;height:0.8px;background:#999"></div>
<div class="a" style="left:313px;top:1621px;width:5px;height:0.8px;background:#999"></div>
<div class="a" style="left:249px;top:1642px;width:74px;height:0.8px;background:#c5d5f0"></div>
<div class="a" style="left:253px;top:1649px;width:42px;height:0.8px;background:#eee"></div>
<div class="a" style="left:253px;top:1653px;width:10px;height:1px;background:#666"></div>
<div class="a" style="left:253px;top:1657px;width:42px;height:5px;background:#f2f2f2;border:0.5px solid #ddd"></div>
<div class="a" style="left:253px;top:1664px;width:8px;height:1px;background:#666"></div>
<div class="a" style="left:253px;top:1670px;width:10px;height:1px;background:#666"></div>
<div class="a" style="left:253px;top:1674px;width:28px;height:0.8px;background:#aaa"></div>
<div class="a" style="left:253px;top:1677px;width:28px;height:0.8px;background:#aaa"></div>
<div class="a" style="left:253px;top:1680px;width:28px;height:0.8px;background:#aaa"></div>
<div class="a" style="left:253px;top:1684px;width:10px;height:1px;background:#666"></div>
<div class="a" style="left:253px;top:1687px;width:40px;height:12px;background:#fff;border:0.5px solid #e4e4e4"></div>
<div class="a" style="left:256px;top:1689px;width:24px;height:0.8px;background:#999"></div>
<div class="a" style="left:256px;top:1692px;width:24px;height:0.8px;background:#999"></div>
<div class="a" style="left:256px;top:1695px;width:24px;height:0.8px;background:#999"></div>
<div class="a" style="left:254px;top:1700px;width:8px;height:1px;background:#555"></div>
<div class="a" style="left:256px;top:1702.5px;width:16px;height:0.8px;background:#aaa"></div>
<div class="a" style="left:254px;top:1706px;width:8px;height:1px;background:#555"></div>
<div class="a" style="left:256px;top:1708.5px;width:16px;height:0.8px;background:#aaa"></div>
<div class="a" style="left:254px;top:1711px;width:8px;height:1px;background:#555"></div>
<div class="a" style="left:256px;top:1713.5px;width:16px;height:0.8px;background:#aaa"></div>
<div class="a" style="left:254px;top:1717px;width:8px;height:1px;background:#555"></div>
<div class="a" style="left:256px;top:1719.5px;width:16px;height:0.8px;background:#aaa"></div>
<div class="a" style="left:253px;top:1723.5px;width:8px;height:0.8px;background:#e87040"></div>
<div class="a" style="left:253px;top:1728px;width:10px;height:1px;background:#666"></div>
<div class="a" style="left:253px;top:1731px;width:42px;height:4px;background:#fff;border:0.5px solid #ddd"></div>
<div class="a" style="left:254px;top:1732px;width:4px;height:2px;background:#111"></div>
<div class="a" style="left:253px;top:1738px;width:8px;height:0.8px;background:#e87040"></div>
<div class="a" style="left:253px;top:1742px;width:43px;height:3px;background:#e85d29"></div>
<div class="a" style="left:249px;top:1752px;width:74px;height:17px;background:#000"></div>
<div class="a" style="left:253px;top:1755px;width:10px;height:1.5px;background:#ddd"></div>
<div class="a" style="left:328px;top:1592px;width:78px;height:160px;background:#fff;border:1px solid #111"></div>
<div class="a" style="left:329px;top:1593px;width:76px;height:4px;background:#1c3670"></div>
<div class="a" style="left:362px;top:1593px;width:11px;height:3px;background:#9a9a9a"></div>
<div class="a" style="left:334px;top:1599px;width:20px;height:2px;background:#c8c8c8"></div>
<div class="a" style="left:334px;top:1603px;width:10px;height:0.8px;background:#7aa0d0"></div>
<div class="a" style="left:334px;top:1606.6px;width:12px;height:12px;background:#6a6a6a"></div>
<div class="a" style="left:348px;top:1607.1px;width:18px;height:0.8px;background:#6f96cc"></div>
<div class="a" style="left:350px;top:1609.6px;width:6px;height:1.5px;background:#ccc"></div>
<div class="a" style="left:370px;top:1607.1px;width:5px;height:1px;background:#777"></div>
<div class="a" style="left:334px;top:1621.5px;width:12px;height:12px;background:#6a6a6a"></div>
<div class="a" style="left:348px;top:1622.0px;width:18px;height:0.8px;background:#6f96cc"></div>
<div class="a" style="left:350px;top:1624.5px;width:6px;height:1.5px;background:#ccc"></div>
<div class="a" style="left:370px;top:1622.0px;width:5px;height:1px;background:#777"></div>
<div class="a" style="left:334px;top:1636.4px;width:12px;height:12px;background:#6a6a6a"></div>
<div class="a" style="left:348px;top:1636.9px;width:18px;height:0.8px;background:#6f96cc"></div>
<div class="a" style="left:350px;top:1639.4px;width:6px;height:1.5px;background:#ccc"></div>
<div class="a" style="left:370px;top:1636.9px;width:5px;height:1px;background:#777"></div>
<div class="a" style="left:378px;top:1605px;width:26px;height:15px;background:#fff;border:0.5px solid #e2e2e2"></div>
<div class="a" style="left:380px;top:1607px;width:7px;height:0.8px;background:#999"></div>
<div class="a" style="left:396px;top:1607px;width:6px;height:0.8px;background:#999"></div>
<div class="a" style="left:380px;top:1610px;width:7px;height:0.8px;background:#999"></div>
<div class="a" style="left:396px;top:1610px;width:6px;height:0.8px;background:#999"></div>
<div class="a" style="left:380px;top:1612.5px;width:7px;height:0.8px;background:#999"></div>
<div class="a" style="left:396px;top:1612.5px;width:6px;height:0.8px;background:#999"></div>
<div class="a" style="left:380px;top:1616px;width:7px;height:0.8px;background:#999"></div>
<div class="a" style="left:396px;top:1616px;width:6px;height:0.8px;background:#999"></div>
<div class="a" style="left:334px;top:1650px;width:44px;height:0.5px;background:#e0e0e0"></div>
<div class="a" style="left:334px;top:1654px;width:8px;height:0.8px;background:#d08050"></div>
<div class="a" style="left:335px;top:1658px;width:40px;height:0.8px;background:#bbb"></div>
<div class="a" style="left:335px;top:1663px;width:40px;height:0.8px;background:#bbb"></div>
<div class="a" style="left:335px;top:1667px;width:40px;height:0.8px;background:#bbb"></div>
<div class="a" style="left:335px;top:1670.5px;width:40px;height:0.8px;background:#bbb"></div>
<div class="a" style="left:335px;top:1674px;width:40px;height:0.8px;background:#bbb"></div>
<div class="a" style="left:335px;top:1677.5px;width:40px;height:0.8px;background:#bbb"></div>
<div class="a" style="left:335px;top:1681px;width:40px;height:0.8px;background:#bbb"></div>
<div class="a" style="left:335px;top:1684.5px;width:40px;height:0.8px;background:#bbb"></div>
<div class="a" style="left:334px;top:1690px;width:8px;height:0.8px;background:#7aa0d0"></div>
<div class="a" style="left:334px;top:1695px;width:8px;height:0.8px;background:#d08050"></div>
<div class="a" style="left:335px;top:1699px;width:5px;height:2px;background:#999"></div>
<div class="a" style="left:341px;top:1699.5px;width:8px;height:0.8px;background:#aaa"></div>
<div class="a" style="left:350px;top:1699.5px;width:10px;height:0.8px;background:#aaa"></div>
<div class="a" style="left:335px;top:1703px;width:5px;height:2px;background:#999"></div>
<div class="a" style="left:341px;top:1703.5px;width:8px;height:0.8px;background:#aaa"></div>
<div class="a" style="left:350px;top:1703.5px;width:10px;height:0.8px;background:#aaa"></div>
<div class="a" style="left:335px;top:1707px;width:5px;height:2px;background:#999"></div>
<div class="a" style="left:341px;top:1707.5px;width:8px;height:0.8px;background:#aaa"></div>
<div class="a" style="left:350px;top:1707.5px;width:10px;height:0.8px;background:#aaa"></div>
<div class="a" style="left:335px;top:1711px;width:5px;height:2px;background:#999"></div>
<div class="a" style="left:341px;top:1711.5px;width:8px;height:0.8px;background:#aaa"></div>
<div class="a" style="left:350px;top:1711.5px;width:10px;height:0.8px;background:#aaa"></div>
<div class="a" style="left:336px;top:1711px;width:5px;height:3px;background:#2c4f9a;border-radius:1px"></div>
<div class="a" style="left:334px;top:1715px;width:10px;height:0.8px;background:#7aa0d0"></div>
<div class="a" style="left:334px;top:1719px;width:43px;height:2.5px;background:#2e8a3e"></div>
<div class="a" style="left:329px;top:1728.5px;width:76px;height:23px;background:#1c3670"></div>
<div class="a" style="left:334px;top:1732px;width:10px;height:1px;background:#ddd"></div>
<div class="a" style="left:334px;top:1735px;width:9px;height:1.5px;background:#fff"></div>
<div class="a" style="left:358px;top:1732.0px;width:7px;height:0.8px;background:#8fa5c8"></div>
<div class="a" style="left:358px;top:1734.5px;width:7px;height:0.8px;background:#8fa5c8"></div>
<div class="a" style="left:358px;top:1737.0px;width:7px;height:0.8px;background:#8fa5c8"></div>
<div class="a" style="left:371px;top:1732.0px;width:7px;height:0.8px;background:#8fa5c8"></div>
<div class="a" style="left:371px;top:1734.5px;width:7px;height:0.8px;background:#8fa5c8"></div>
<div class="a" style="left:371px;top:1737.0px;width:7px;height:0.8px;background:#8fa5c8"></div>
<div class="a" style="left:379px;top:1732.0px;width:7px;height:0.8px;background:#8fa5c8"></div>
<div class="a" style="left:379px;top:1734.5px;width:7px;height:0.8px;background:#8fa5c8"></div>
<div class="a" style="left:379px;top:1737.0px;width:7px;height:0.8px;background:#8fa5c8"></div>
<div class="a" style="left:346px;top:1747px;width:40px;height:0.8px;background:#6a82b0"></div>
<div class="a" style="left:63px;top:1814px;width:350px;height:220px;background:#fff;border:1.5px solid #c6c6c6"></div>
<div class="t" style="left:22px;top:1813.9px;font-size:26px;color:#555;font-weight:bold;">8</div>
<div class="t" style="left:78px;top:1826.5px;font-size:7.2px;color:#111;font-weight:bold;">Checkout – Single Page</div>
<div class="t" style="left:79px;top:1847.0px;font-size:5.94px;color:#222;font-weight:normal;">A common problem associated with single page</div>
<div class="t" style="left:79px;top:1855.0px;font-size:5.94px;color:#222;font-weight:normal;">checkouts are that “they're unwieldy, overwhelming</div>
<div class="t" style="left:79px;top:1864.0px;font-size:5.94px;color:#222;font-weight:normal;">and contain lots of info”.</div>
<div class="t" style="left:79px;top:1878.5px;font-size:5.94px;color:#222;font-weight:normal;">For forms that can be simplified to approximately 7</div>
<div class="t" style="left:79px;top:1886.5px;font-size:5.94px;color:#222;font-weight:normal;">form fields, 2 checkboxes, 2 drop-downs, and 1 radio</div>
<div class="t" style="left:79px;top:1894.5px;font-size:5.94px;color:#222;font-weight:normal;">button interface are great candidates for single page</div>
<div class="t" style="left:79px;top:1902.5px;font-size:5.94px;color:#222;font-weight:normal;">checkouts.</div>
<div class="t" style="left:79px;top:1917.5px;font-size:5.94px;color:#222;font-weight:normal;">Best to have a dedicated review step</div>
<div class="t" style="left:78px;top:1932.8px;font-size:3.8px;color:#222;font-weight:normal;">Reference:</div>
<div class="a" style="left:79px;top:1940px;width:84px;height:2px;background:#2a5fc0"></div>
<div class="a" style="left:288px;top:1823px;width:116px;height:173px;background:#fff;border:0.8px solid #e2e2e2"></div>
<div class="a" style="left:288px;top:1823px;width:116px;height:9px;background:#88b244"></div>
<div class="a" style="left:291px;top:1825px;width:14px;height:4px;background:#d9e8c2"></div>
<div class="a" style="left:340px;top:1825px;width:60px;height:1px;background:#d9e8c2"></div>
<div class="a" style="left:343px;top:1828px;width:57px;height:1px;background:#d9e8c2"></div>
<div class="a" style="left:289px;top:1832px;width:114px;height:11.5px;background:#f0f0f0"></div>
<div class="a" style="left:310px;top:1834px;width:13px;height:1px;background:#999"></div>
<div class="a" style="left:310px;top:1837px;width:15px;height:4px;background:#78a640"></div>
<div class="a" style="left:365px;top:1834px;width:15px;height:1px;background:#999"></div>
<div class="a" style="left:367px;top:1838px;width:16px;height:3px;background:#f1c040"></div>
<div class="a" style="left:291px;top:1847.0px;width:4.6px;height:4.6px;border-radius:50%;background:#79a844"></div>
<div class="a" style="left:297px;top:1847.3px;width:6px;height:1px;background:#aaa"></div>
<div class="a" style="left:297px;top:1849.3px;width:5px;height:1px;background:#aaa"></div>
<div class="a" style="left:291px;top:1914.7px;width:4.6px;height:4.6px;border-radius:50%;background:#79a844"></div>
<div class="a" style="left:297px;top:1915px;width:6px;height:1px;background:#aaa"></div>
<div class="a" style="left:297px;top:1917px;width:5px;height:1px;background:#aaa"></div>
<div class="a" style="left:291px;top:1935.0px;width:4.6px;height:4.6px;border-radius:50%;background:#79a844"></div>
<div class="a" style="left:297px;top:1935.3px;width:6px;height:1px;background:#aaa"></div>
<div class="a" style="left:297px;top:1937.3px;width:5px;height:1px;background:#aaa"></div>
<div class="a" style="left:291px;top:1960.2px;width:4.6px;height:4.6px;border-radius:50%;background:#79a844"></div>
<div class="a" style="left:297px;top:1960.5px;width:6px;height:1px;background:#aaa"></div>
<div class="a" style="left:297px;top:1962.5px;width:5px;height:1px;background:#aaa"></div>
<div class="a" style="left:310px;top:1847px;width:50px;height:0.8px;background:#bbb"></div>
<div class="a" style="left:329px;top:1850px;width:36px;height:3.5px;background:#fff;border:0.6px solid #cfcfcf"></div>
<div class="a" style="left:317px;top:1851.5px;width:10px;height:0.8px;background:#999"></div>
<div class="a" style="left:329px;top:1856px;width:36px;height:3.5px;background:#fff;border:0.6px solid #cfcfcf"></div>
<div class="a" style="left:317px;top:1857.5px;width:10px;height:0.8px;background:#999"></div>
<div class="a" style="left:329px;top:1861px;width:20px;height:3.5px;background:#fff;border:0.6px solid #cfcfcf"></div>
<div class="a" style="left:317px;top:1862.5px;width:10px;height:0.8px;background:#999"></div>
<div class="a" style="left:329px;top:1866px;width:36px;height:3.5px;background:#fff;border:0.6px solid #cfcfcf"></div>
<div class="a" style="left:317px;top:1867.5px;width:10px;height:0.8px;background:#999"></div>
<div class="a" style="left:329px;top:1872px;width:36px;height:3.5px;background:#fff;border:0.6px solid #cfcfcf"></div>
<div class="a" style="left:317px;top:1873.5px;width:10px;height:0.8px;background:#999"></div>
<div class="a" style="left:329px;top:1877px;width:25px;height:3.5px;background:#fff;border:0.6px solid #cfcfcf"></div>
<div class="a" style="left:317px;top:1878.5px;width:10px;height:0.8px;background:#999"></div>
<div class="a" style="left:329px;top:1882px;width:36px;height:3.5px;background:#fff;border:0.6px solid #cfcfcf"></div>
<div class="a" style="left:317px;top:1883.5px;width:10px;height:0.8px;background:#999"></div>
<div class="a" style="left:329px;top:1888px;width:13px;height:3.5px;background:#fff;border:0.6px solid #cfcfcf"></div>
<div class="a" style="left:317px;top:1889.5px;width:10px;height:0.8px;background:#999"></div>
<div class="a" style="left:329px;top:1894px;width:18px;height:3.5px;background:#fff;border:0.6px solid #cfcfcf"></div>
<div class="a" style="left:317px;top:1895.5px;width:10px;height:0.8px;background:#999"></div>
<div class="a" style="left:329px;top:1899px;width:36px;height:3.5px;background:#fff;border:0.6px solid #cfcfcf"></div>
<div class="a" style="left:317px;top:1900.5px;width:10px;height:0.8px;background:#999"></div>
<div class="a" style="left:329px;top:1905px;width:35px;height:1px;background:#aaa"></div>
<div class="a" style="left:299px;top:1910px;width:90px;height:0.6px;background:#e6e6e6"></div>
<div class="a" style="left:310px;top:1915px;width:18px;height:1px;background:#999"></div>
<div class="a" style="left:310px;top:1918px;width:16px;height:1px;background:#bbb"></div>
<div class="a" style="left:310px;top:1923px;width:40px;height:1px;background:#bbb"></div>
<div class="a" style="left:299px;top:1931px;width:90px;height:0.6px;background:#e6e6e6"></div>
<div class="a" style="left:310px;top:1936px;width:50px;height:1px;background:#bbb"></div>
<div class="a" style="left:348px;top:1936px;width:14px;height:1px;background:#e8744a"></div>
<div class="a" style="left:310px;top:1939px;width:50px;height:1px;background:#bbb"></div>
<div class="a" style="left:348px;top:1939px;width:14px;height:1px;background:#e8744a"></div>
<div class="a" style="left:310px;top:1943px;width:55px;height:1px;background:#ccc"></div>
<div class="a" style="left:310px;top:1945px;width:40px;height:1px;background:#ccc"></div>
<div class="a" style="left:310px;top:1949px;width:50px;height:1px;background:#ccc"></div>
<div class="a" style="left:310px;top:1951px;width:40px;height:1px;background:#ccc"></div>
<div class="a" style="left:309px;top:1960px;width:58px;height:32px;background:linear-gradient(#f7f7f7,#e6e6e6);border:0.6px solid #ddd"></div>
<div class="a" style="left:312px;top:1963px;width:30px;height:1px;background:#777"></div>
<div class="a" style="left:312px;top:1966px;width:40px;height:1px;background:#bbb"></div>
<div class="a" style="left:313px;top:1972px;width:6px;height:2px;background:#5a8fd8"></div>
<div class="a" style="left:322px;top:1971px;width:7px;height:3px;background:#e5a030"></div>
<div class="a" style="left:314px;top:1976px;width:10px;height:1px;background:#777"></div>
<div class="a" style="left:327px;top:1975px;width:17px;height:3px;background:#fff;border:0.5px solid #ccc"></div>
<div class="a" style="left:314px;top:1981px;width:10px;height:1px;background:#777"></div>
<div class="a" style="left:327px;top:1980px;width:17px;height:3px;background:#fff;border:0.5px solid #ccc"></div>
<div class="a" style="left:314px;top:1986px;width:6px;height:3px;background:#6a9ad8"></div>
<div class="a" style="left:321px;top:1987px;width:10px;height:1px;background:#8cbf6a"></div>
<div class="a" style="left:373px;top:1846px;width:28px;height:5px;background:#f07c2a;border-radius:3px"></div>
<div class="a" style="left:373px;top:1854px;width:27px;height:23px;background:#eef3e0;border:0.5px solid #d8e2c0"></div>
<div class="a" style="left:373px;top:1854px;width:27px;height:4px;background:#8db653"></div>
<div class="a" style="left:376px;top:1861px;width:8px;height:0.8px;background:#888"></div>
<div class="a" style="left:393px;top:1861px;width:5px;height:0.8px;background:#888"></div>
<div class="a" style="left:376px;top:1863.5px;width:8px;height:0.8px;background:#888"></div>
<div class="a" style="left:393px;top:1863.5px;width:5px;height:0.8px;background:#888"></div>
<div class="a" style="left:376px;top:1866px;width:8px;height:0.8px;background:#888"></div>
<div class="a" style="left:393px;top:1866px;width:5px;height:0.8px;background:#888"></div>
<div class="a" style="left:376px;top:1870px;width:8px;height:0.8px;background:#888"></div>
<div class="a" style="left:393px;top:1870px;width:5px;height:0.8px;background:#888"></div>
<div class="a" style="left:376px;top:1873.5px;width:8px;height:0.8px;background:#888"></div>
<div class="a" style="left:393px;top:1873.5px;width:5px;height:0.8px;background:#888"></div>
<div class="a" style="left:373px;top:1878px;width:27px;height:4px;background:#666"></div>
<div class="a" style="left:373px;top:1883px;width:27px;height:4px;background:#9a9a9a"></div>
<div class="a" style="left:377px;top:1890px;width:8px;height:3px;background:#cde0b0"></div>
<div class="a" style="left:388px;top:1890px;width:9px;height:3px;background:#e6d0d0"></div>
<div class="a" style="left:378px;top:1895px;width:20px;height:0.8px;background:#999"></div>
<div class="a" style="left:378px;top:1897px;width:18px;height:1px;background:#8cbf6a"></div>
<div class="a" style="left:373px;top:1903px;width:28px;height:5px;background:#f07c2a;border-radius:3px"></div>
<div class="a" style="left:376px;top:1911px;width:22px;height:0.8px;background:#999"></div>
<div class="a" style="left:381px;top:1913px;width:10px;height:0.8px;background:#999"></div>
<div class="a" style="left:325px;top:1999px;width:50px;height:0.8px;background:#8ea8e8"></div>
<div class="a" style="left:316px;top:2002px;width:68px;height:0.8px;background:#aaa"></div>
</div></div>
<svg class="a" style="left:2331px;top:2019px;" width="28" height="26" viewBox="0 0 28 26"><path d="M14 0l6 6H8z" fill="#5a5a5a"/><path d="M0 10h28M4 15h20M0 20h28M0 25h14" stroke="#5a5a5a" stroke-width="2"/></svg>
<div class="t" style="left:2367.5px;top:2022.2px;font-size:25px;color:#5a5a5a;font-weight:normal;">Notes</div>
<svg class="a" style="left:2473px;top:2021px;" width="28" height="26" viewBox="0 0 28 26"><path d="M2 0h24a2 2 0 0 1 2 2v15a2 2 0 0 1-2 2H12l-7 6v-6H2a2 2 0 0 1-2-2V2a2 2 0 0 1 2-2z" fill="#5a5a5a"/></svg>
<div class="t" style="left:2509.5px;top:2022.2px;font-size:25px;color:#5a5a5a;font-weight:normal;">Comments</div>
<div class="a" style="left:2650px;top:2011px;width:74px;height:45px;background:#a8a8a8"></div>
<svg class="a" style="left:2672px;top:2019px;" width="30" height="28" viewBox="0 0 30 28"><rect x="1.5" y="1.5" width="27" height="25" rx="2" fill="#fff"/><rect x="5" y="22" width="20" height="2" fill="#a8a8a8"/><rect x="9" y="8" width="12" height="6" fill="#a8a8a8"/><rect x="5" y="4" width="2" height="16" fill="#a8a8a8"/></svg>
<svg class="a" style="left:2744px;top:2022px;" width="31" height="23" viewBox="0 0 31 23"><rect x="0" y="0" width="13" height="9.5" rx="2" fill="#5a5a5a"/><rect x="18" y="0" width="13" height="9.5" rx="2" fill="#5a5a5a"/><rect x="0" y="13.5" width="13" height="9.5" rx="2" fill="#5a5a5a"/><rect x="18" y="13.5" width="13" height="9.5" rx="2" fill="#5a5a5a"/></svg>
<svg class="a" style="left:2816px;top:2021px;" width="30" height="27" viewBox="0 0 30 27"><rect x="0" y="0" width="30" height="3" fill="#5a5a5a"/><rect x="2.5" y="3" width="25" height="15" fill="none" stroke="#5a5a5a" stroke-width="2.2"/><path d="M7 9h16" stroke="#5a5a5a" stroke-width="2"/><path d="M15 18v7M9 26h12" stroke="#5a5a5a" stroke-width="2.2"/></svg>
<div class="a" style="left:2882px;top:2031.5px;width:16px;height:3.5px;background:#5a5a5a"></div>
<div class="a" style="left:2914px;top:2029px;width:196px;height:8px;background:#a3a3a3;border-radius:4px"></div>
<div class="a" style="left:3011.5px;top:2020.5px;width:25px;height:25px;background:#fff;border-radius:50%;box-shadow:0 1px 2px rgba(0,0,0,.35)"></div>
<svg class="a" style="left:3125px;top:2024px;" width="18" height="18" viewBox="0 0 18 18"><path d="M9 0v18M0 9h18" stroke="#5a5a5a" stroke-width="3.5"/></svg>
<div class="t" style="left:3176px;top:2022.2px;font-size:25px;color:#5a5a5a;font-weight:normal;">142%</div>
<svg class="a" style="left:3278px;top:2019px;" width="27" height="28" viewBox="0 0 27 28"><rect x="1" y="1" width="25" height="26" fill="none" stroke="#5a5a5a" stroke-width="2"/><path d="M13.5 5v18M5 14h17" stroke="#5a5a5a" stroke-width="1.3"/><path d="M13.5 4l-3 4h6zM13.5 24l-3-4h6zM4 14l4-3v6zM23 14l-4-3v6z" fill="#5a5a5a"/></svg>
<svg class="a" style="left:3346px;top:2042px;" width="14" height="14" viewBox="0 0 14 14"><path d="M14 0v14H0a14 14 0 0 0 14-14z" fill="#0a0a0a"/></svg>
<svg class="a" style="left:0px;top:2042px;" width="14" height="14" viewBox="0 0 14 14"><path d="M0 0v14h14A14 14 0 0 1 0 0z" fill="#0a0a0a"/></svg>
</body></html>
